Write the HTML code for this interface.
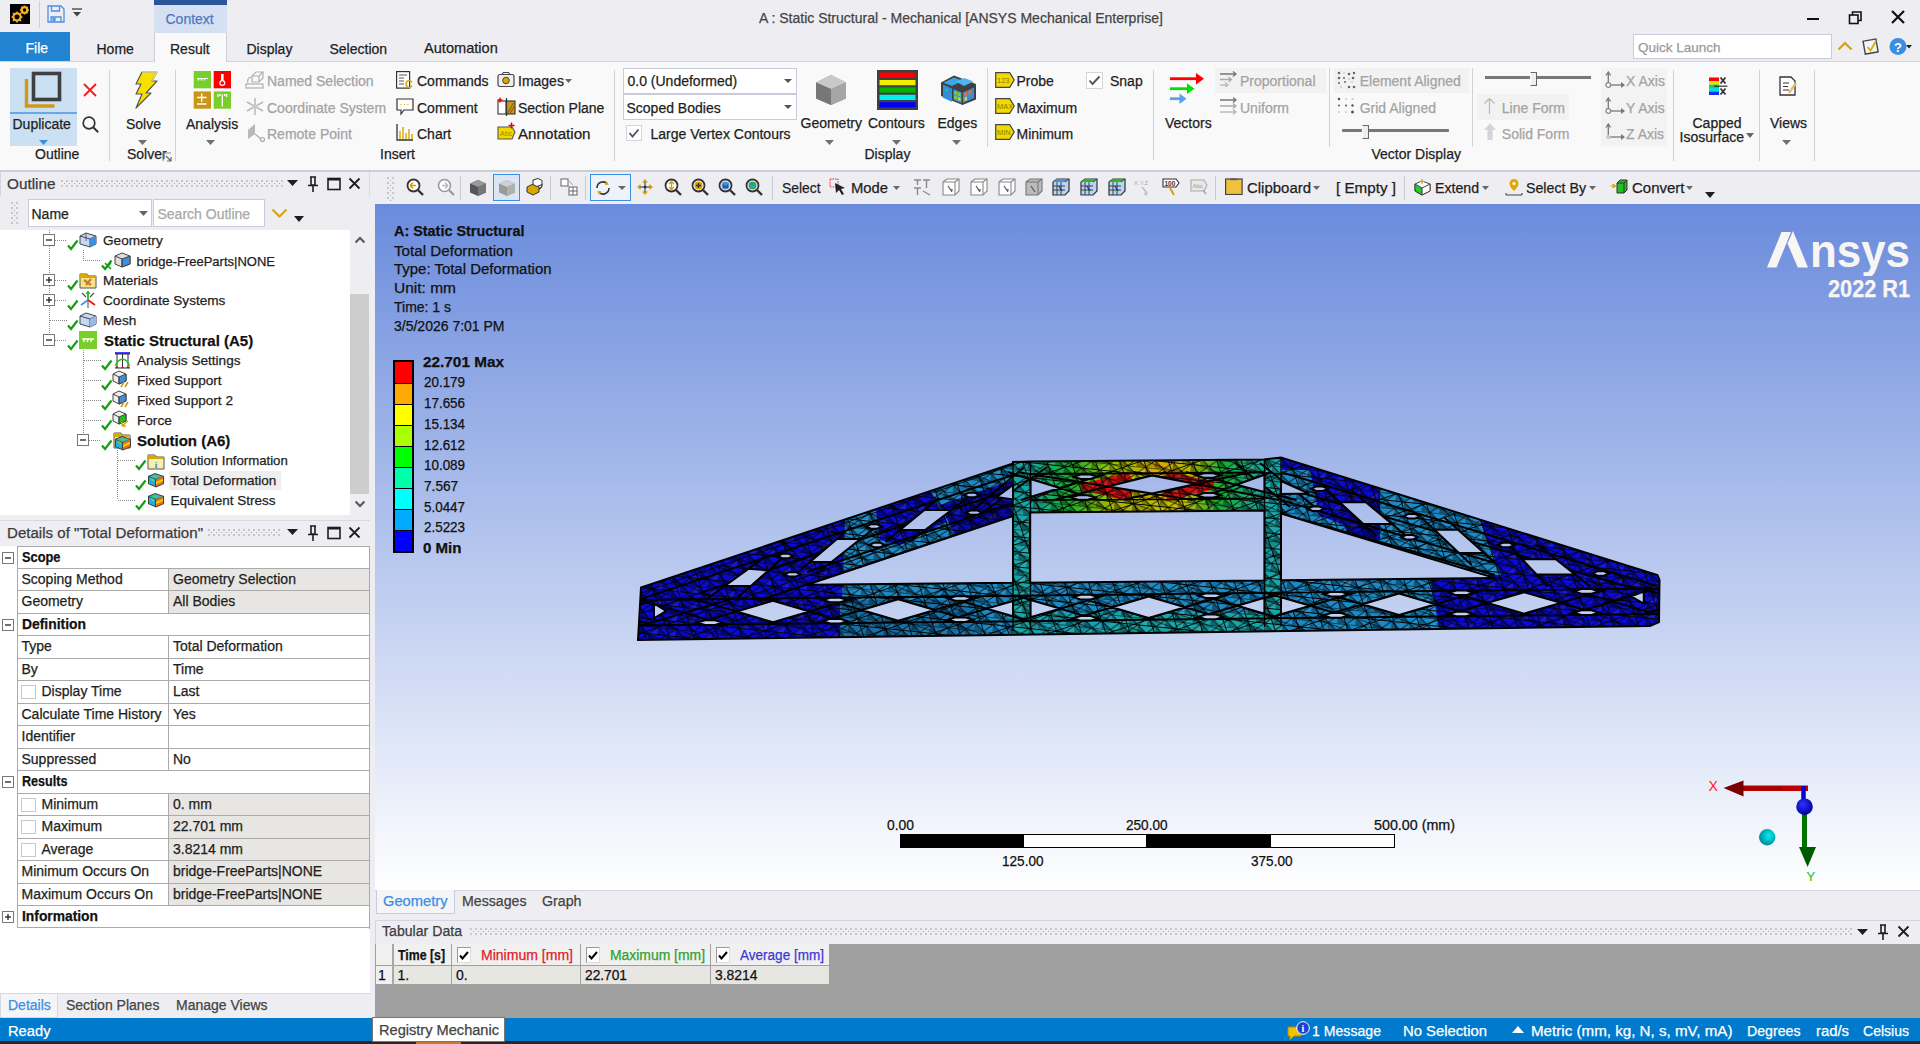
<!DOCTYPE html><html><head><meta charset="utf-8"><style>
html,body{margin:0;padding:0;width:1920px;height:1044px;overflow:hidden;background:#eeeef2;font-family:"Liberation Sans",sans-serif;}
.a{position:absolute;}
.t{position:absolute;white-space:nowrap;-webkit-text-stroke:0.25px currentColor;}
</style></head><body>

<div class="a" style="left:0px;top:0px;width:1920px;height:32px;background:#eeeef2"></div>
<svg class="a" style="left:10px;top:4px;" width="20" height="20" viewBox="0 0 20 20"><rect width="20" height="20" fill="#000"/>
<g fill="none" stroke="#f0b020" stroke-width="2.2"><circle cx="7" cy="13" r="3.6"/><circle cx="14.5" cy="6" r="2.8"/></g>
<g stroke="#f0b020" stroke-width="1.6"><path d="M7 7.5v2M7 16.5v2M1.5 13h2M10.5 13h2M3 9l1.4 1.4M11 17l-1.4-1.4M3 17l1.4-1.4M11 9l-1.4 1.4"/>
<path d="M14.5 1.5v1.5M14.5 9v1.5M10 6h1.5M17.5 6h1.5M11.3 2.8l1 1M17.7 9.2l-1-1M11.3 9.2l1-1M17.7 2.8l-1 1"/></g></svg>
<div class="a" style="left:39px;top:1px;width:1px;height:27px;background:#d0d0d4"></div>
<svg class="a" style="left:47px;top:5px;" width="18" height="18" viewBox="0 0 18 18"><g fill="none" stroke="#4a90e2" stroke-width="1.3"><path d="M1 1h13l3 3v13H1z"/><path d="M4.5 1v5h8V1"/><path d="M4 17v-5h10v5"/><rect x="6" y="13.5" width="2" height="2"/></g></svg>
<svg class="a" style="left:72px;top:8px;" width="10" height="9" viewBox="0 0 10 9"><path d="M0 1h10" stroke="#555" stroke-width="1.5"/><path d="M1 4h8l-4 4.5z" fill="#444"/></svg>
<div class="a" style="left:154px;top:0px;width:73px;height:5px;background:#2b579a"></div>
<div class="a" style="left:154px;top:5px;width:73px;height:28px;background:#d5e1f2"></div>
<div class="t" style="left:165.5px;top:11.85px;font-size:14px;line-height:14px;color:#4f78bd;font-weight:normal;">Context</div>
<div class="t" style="left:759px;top:10.65px;font-size:14px;line-height:14px;color:#444;font-weight:normal;">A : Static Structural - Mechanical [ANSYS Mechanical Enterprise]</div>
<div class="a" style="left:1807px;top:18px;width:12px;height:2px;background:#111"></div>
<svg class="a" style="left:1848px;top:10px;" width="16" height="16" viewBox="0 0 16 16"><g fill="none" stroke="#111" stroke-width="1.6"><rect x="1.5" y="5" width="8.5" height="8.5"/><path d="M4.5 5V2h8.5v8.5H10"/></g></svg>
<svg class="a" style="left:1890px;top:9px;" width="16" height="16" viewBox="0 0 16 16"><path d="M2 2l12 12M14 2L2 14" stroke="#111" stroke-width="2.2"/></svg>
<div class="a" style="left:0px;top:61px;width:1920px;height:1px;background:#d4d4d8"></div>
<div class="a" style="left:0px;top:32px;width:70px;height:29px;background:#2383d3"></div>
<div class="t" style="left:25.5px;top:40.85px;font-size:14px;line-height:14px;color:#fff;font-weight:normal;">File</div>
<div class="t" style="left:96.5px;top:41.65px;font-size:14px;line-height:14px;color:#1e1e1e;font-weight:normal;">Home</div>
<div class="a" style="left:154px;top:33px;width:73px;height:29px;background:#f9f9f9;border-left:1px solid #d0d0d4;border-right:1px solid #d0d0d4;box-sizing:border-box"></div>
<div class="t" style="left:170px;top:41.65px;font-size:14px;line-height:14px;color:#1e1e1e;font-weight:normal;">Result</div>
<div class="t" style="left:246.5px;top:41.65px;font-size:14px;line-height:14px;color:#1e1e1e;font-weight:normal;">Display</div>
<div class="t" style="left:329.5px;top:41.65px;font-size:14px;line-height:14px;color:#1e1e1e;font-weight:normal;">Selection</div>
<div class="t" style="left:424px;top:41.14px;font-size:14.6px;line-height:14.6px;color:#1e1e1e;font-weight:normal;">Automation</div>
<div class="a" style="left:1633px;top:34px;width:199px;height:25px;background:#fff;border:1px solid #c8cbd8;box-sizing:border-box"></div>
<div class="t" style="left:1638px;top:40.57px;font-size:13.5px;line-height:13.5px;color:#9a9a9a;font-weight:normal;">Quick Launch</div>
<svg class="a" style="left:1837px;top:40px;" width="16" height="12" viewBox="0 0 16 12"><path d="M1.5 9.5L8 3l6.5 6.5" fill="none" stroke="#d4a017" stroke-width="2.2"/></svg>
<svg class="a" style="left:1861px;top:36px;" width="20" height="20" viewBox="0 0 20 20"><g transform="rotate(-10 10 10)"><rect x="3" y="4" width="13" height="13" fill="#f4f4f4" stroke="#444" stroke-width="1.4"/></g><path d="M6.5 11l3 3.5L15 5" fill="none" stroke="#e0a800" stroke-width="1.8"/></svg>
<svg class="a" style="left:1889px;top:37px;" width="24" height="20" viewBox="0 0 24 20"><circle cx="9" cy="9.5" r="8.5" fill="#3b8de4"/><text x="9" y="14.5" font-family="Liberation Sans" font-weight="bold" font-size="13" fill="#fff" text-anchor="middle">?</text><path d="M17 8h6l-3 3.5z" fill="#222"/></svg>
<div class="a" style="left:0px;top:62px;width:1920px;height:108px;background:#f9f9f9"></div>
<div class="a" style="left:0px;top:170px;width:1920px;height:2px;background:#cdcdd4"></div>
<div class="a" style="left:10px;top:68px;width:67px;height:78px;background:#cce0f4"></div>
<div class="a" style="left:10px;top:112px;width:67px;height:2px;background:#6aa7e6"></div>
<svg class="a" style="left:22px;top:70px;" width="42" height="40" viewBox="0 0 42 40"><path d="M4.5 9v27h28" fill="none" stroke="#cf9a12" stroke-width="3.4"/><rect x="11.5" y="3.5" width="26" height="26" fill="none" stroke="#404040" stroke-width="3.6"/></svg>
<div class="t" style="left:12.5px;top:117.15px;font-size:14px;line-height:14px;color:#1e1e1e;font-weight:normal;">Duplicate</div>
<svg class="a" style="left:38.5px;top:140px;" width="9" height="5" viewBox="0 0 9 5"><path d="M0 0h9L4.5 5z" fill="#3a8fe0"/></svg>
<svg class="a" style="left:82px;top:82px;" width="16" height="16" viewBox="0 0 16 16"><path d="M2 2l12 12M14 2L2 14" stroke="#ee1c1c" stroke-width="1.8"/></svg>
<svg class="a" style="left:81px;top:115px;" width="19" height="19" viewBox="0 0 19 19"><circle cx="8" cy="8" r="5.8" fill="none" stroke="#333" stroke-width="1.7"/><path d="M12.2 12.2l5 5" stroke="#333" stroke-width="2"/></svg>
<div class="t" style="left:35px;top:146.75px;font-size:14px;line-height:14px;color:#1e1e1e;font-weight:normal;">Outline</div>
<div class="a" style="left:109px;top:70px;width:1px;height:91px;background:#d2d2d8"></div>
<svg class="a" style="left:132px;top:71px;" width="26" height="38" viewBox="0 0 26 38"><path d="M10 1h15l-5 9h5L14 22h5L4 37l6-14H4l5-10H4z" fill="#f7e000" stroke="#555" stroke-width="1.2" stroke-linejoin="round"/><path d="M10 1h15l-5 9" fill="none" stroke="#f9f3a0" stroke-width="1"/></svg>
<div class="t" style="left:126px;top:117.15px;font-size:14px;line-height:14px;color:#1e1e1e;font-weight:normal;">Solve</div>
<svg class="a" style="left:138px;top:140px;" width="9" height="5" viewBox="0 0 9 5"><path d="M0 0h9L4.5 5z" fill="#707070"/></svg>
<div class="t" style="left:127px;top:146.75px;font-size:14px;line-height:14px;color:#1e1e1e;font-weight:normal;">Solver</div>
<svg class="a" style="left:162px;top:152px;" width="10" height="10" viewBox="0 0 10 10"><path d="M1 9V1h8" fill="none" stroke="#888" stroke-width="1"/><path d="M4 4l5 5M9 5v4H5" fill="none" stroke="#666" stroke-width="1.2"/></svg>
<div class="a" style="left:175px;top:70px;width:1px;height:91px;background:#d2d2d8"></div>
<svg class="a" style="left:193px;top:71px;" width="39" height="38" viewBox="0 0 39 38"><rect x="0.7" y="0" width="17.3" height="17.3" fill="#78cf2c"/><rect x="20.7" y="0" width="17.3" height="17.3" fill="#f00"/>
<rect x="0.7" y="20.4" width="17.3" height="17.3" fill="#c9961a"/><rect x="20.7" y="20.4" width="17.3" height="17.3" fill="#78cf2c"/>
<path d="M4 7.5h11M6 7.5l-1 2M9 7.5l-1 2M12 7.5l-1 2" stroke="#fff" stroke-width="1.2"/>
<circle cx="29.3" cy="12" r="2.4" fill="none" stroke="#fff" stroke-width="1.2"/><path d="M29.3 3v6.6" stroke="#fff" stroke-width="2.6"/>
<path d="M4 26.5h9.5M8.7 22.5v8.5M4 33h9.5" stroke="#fff" stroke-width="1.3"/>
<path d="M29.3 23.5v12M25 23v3M33.6 23v3M27 23v2M31.6 23v2" stroke="#fff" stroke-width="1.3"/></svg>
<div class="t" style="left:186px;top:117.15px;font-size:14px;line-height:14px;color:#1e1e1e;font-weight:normal;">Analysis</div>
<svg class="a" style="left:206px;top:140px;" width="9" height="5" viewBox="0 0 9 5"><path d="M0 0h9L4.5 5z" fill="#707070"/></svg>
<svg class="a" style="left:245px;top:71px;" width="20" height="18" viewBox="0 0 20 18"><g fill="none" stroke="#b0b0b0" stroke-width="1.2"><rect x="1" y="13" width="17" height="4"/><path d="M7 11V5l4-4h7v6l-4 4zM7 5h7l4-4M14 5v6"/><path d="M3 12c-1-3 0-5 3-6"/></g></svg>
<div class="t" style="left:267px;top:74.15px;font-size:14px;line-height:14px;color:#a3a3a3;font-weight:normal;">Named Selection</div>
<svg class="a" style="left:246px;top:97px;" width="18" height="19" viewBox="0 0 18 19"><g stroke="#b8b8b8" stroke-width="1.5"><path d="M9 1v17M1 5l16 9M17 5L1 14"/></g><circle cx="9" cy="9.5" r="2" fill="#c8c8c8"/></svg>
<div class="t" style="left:267px;top:100.65px;font-size:14px;line-height:14px;color:#a3a3a3;font-weight:normal;">Coordinate System</div>
<svg class="a" style="left:246px;top:122px;" width="20" height="20" viewBox="0 0 20 20"><path d="M2 8l7-6v10l-7 5z" fill="#b8b8b8"/><path d="M9 12l6 5" stroke="#aaa" stroke-width="1.2"/><circle cx="16.5" cy="17.5" r="2" fill="none" stroke="#aaa" stroke-width="1.2"/></svg>
<div class="t" style="left:267px;top:126.75px;font-size:14px;line-height:14px;color:#a3a3a3;font-weight:normal;">Remote Point</div>
<svg class="a" style="left:396px;top:71px;" width="18" height="18" viewBox="0 0 18 18"><rect x="0.6" y="0.6" width="13" height="16.5" fill="#fff" stroke="#333" stroke-width="1.2"/><path d="M3 4h8M3 7h5M3 10h5M3 13h5" stroke="#555" stroke-width="1"/><text x="9" y="17" font-family="Liberation Sans" font-size="11" fill="#d9a800" font-weight="bold">C</text></svg>
<div class="t" style="left:417px;top:74.15px;font-size:14px;line-height:14px;color:#1e1e1e;font-weight:normal;">Commands</div>
<svg class="a" style="left:396px;top:98px;" width="18" height="18" viewBox="0 0 18 18"><path d="M1 1h16v11H8l-3 4v-4H1z" fill="#fff" stroke="#333" stroke-width="1.2"/><path d="M4.5 6.5h1M8 6.5h1M11.5 6.5h1" stroke="#d9a800" stroke-width="1.2"/></svg>
<div class="t" style="left:417px;top:100.65px;font-size:14px;line-height:14px;color:#1e1e1e;font-weight:normal;">Comment</div>
<svg class="a" style="left:396px;top:123px;" width="18" height="18" viewBox="0 0 18 18"><path d="M1 1v16h16" fill="none" stroke="#333" stroke-width="1.3"/><path d="M4 16V8M7 16V4M10 16V10M13 16V6M16 16V11" stroke="#d9a800" stroke-width="1.4"/></svg>
<div class="t" style="left:417px;top:126.75px;font-size:14px;line-height:14px;color:#1e1e1e;font-weight:normal;">Chart</div>
<svg class="a" style="left:497px;top:71px;" width="18" height="17" viewBox="0 0 18 17"><rect x="1" y="3.5" width="16" height="12" rx="2" fill="#eee" stroke="#444" stroke-width="1.2"/><path d="M5 3.5l1.5-2h5l1.5 2" fill="none" stroke="#444" stroke-width="1.1"/><circle cx="9" cy="9.5" r="3.3" fill="#d9a800" stroke="#444" stroke-width="1"/></svg>
<div class="t" style="left:518px;top:74.15px;font-size:14px;line-height:14px;color:#1e1e1e;font-weight:normal;">Images</div>
<svg class="a" style="left:565px;top:79px;" width="7" height="4" viewBox="0 0 7 4"><path d="M0 0h7L3.5 4z" fill="#666"/></svg>
<svg class="a" style="left:497px;top:97px;" width="19" height="19" viewBox="0 0 19 19"><rect x="1" y="4" width="9" height="13" fill="#fff" stroke="#333" stroke-width="1.1"/><rect x="9" y="4" width="9" height="13" fill="#c9961a" stroke="#333" stroke-width="1.1"/><path d="M10.5 16l6-10M12.5 17l5-8" stroke="#7a5a00" stroke-width="1"/><path d="M9.5 1v18" stroke="#333" stroke-width="1.2"/><path d="M3 0.5v5M0.5 3h5" stroke="#e00" stroke-width="1.4"/></svg>
<div class="t" style="left:518px;top:100.65px;font-size:14px;line-height:14px;color:#1e1e1e;font-weight:normal;">Section Plane</div>
<svg class="a" style="left:497px;top:122px;" width="19" height="19" viewBox="0 0 19 19"><path d="M1 5h14l3 5-3 7H1z" fill="#f2d800" stroke="#555" stroke-width="1.1"/><text x="3" y="14" font-family="Liberation Sans" font-size="7" fill="#9a8a00">Abc</text><path d="M14.5 0.5v6M11.5 3.5h6" stroke="#e00" stroke-width="1.5"/></svg>
<div class="t" style="left:518px;top:126.75px;font-size:14px;line-height:14px;color:#1e1e1e;font-weight:normal;transform:scaleX(1.0831);transform-origin:0 0;">Annotation</div>
<div class="t" style="left:380px;top:146.75px;font-size:14px;line-height:14px;color:#1e1e1e;font-weight:normal;">Insert</div>
<div class="a" style="left:614px;top:70px;width:1px;height:91px;background:#d2d2d8"></div>
<div class="a" style="left:623px;top:68px;width:174px;height:26px;background:#fff;border:1px solid #c9cbdc;box-sizing:border-box"></div>
<div class="t" style="left:627.5px;top:74.15px;font-size:14px;line-height:14px;color:#1e1e1e;font-weight:normal;">0.0 (Undeformed)</div>
<svg class="a" style="left:784px;top:79px;" width="8" height="4" viewBox="0 0 8 4"><path d="M0 0h8L4 4z" fill="#555"/></svg>
<div class="a" style="left:623px;top:94px;width:174px;height:26px;background:#fff;border:1px solid #c9cbdc;box-sizing:border-box"></div>
<div class="t" style="left:626.5px;top:100.65px;font-size:14px;line-height:14px;color:#1e1e1e;font-weight:normal;">Scoped Bodies</div>
<svg class="a" style="left:784px;top:105px;" width="8" height="4" viewBox="0 0 8 4"><path d="M0 0h8L4 4z" fill="#555"/></svg>
<div class="a" style="left:626px;top:125px;width:16px;height:16px;background:#fff;border:1px solid #d4d4dc;box-sizing:border-box"></div>
<svg class="a" style="left:628px;top:128px;" width="12" height="10" viewBox="0 0 12 10"><path d="M1.5 5l3 3.5L10.5 1.5" fill="none" stroke="#555" stroke-width="1.9"/></svg>
<div class="t" style="left:650.5px;top:126.75px;font-size:14px;line-height:14px;color:#1e1e1e;font-weight:normal;">Large Vertex Contours</div>
<svg class="a" style="left:815px;top:74px;" width="32" height="32" viewBox="0 0 32 32"><path d="M16 1l15 7.5v16L16 31 1 24.5v-16z" fill="#8e8e8e"/><path d="M1 8.5L16 15l15-6.5L16 1z" fill="#c9c9c9"/><path d="M16 15v16l15-6.5v-16z" fill="#a5a5a5"/><path d="M1 8.5L16 15v16L1 24.5z" fill="#777"/></svg>
<div class="t" style="left:800.5px;top:116.15px;font-size:14px;line-height:14px;color:#1e1e1e;font-weight:normal;">Geometry</div>
<svg class="a" style="left:825px;top:140px;" width="9" height="5" viewBox="0 0 9 5"><path d="M0 0h9L4.5 5z" fill="#707070"/></svg>
<svg class="a" style="left:877px;top:70px;" width="41" height="40" viewBox="0 0 41 40"><rect x="0" y="0" width="41" height="40" fill="#404040"/><rect x="2.5" y="2.5" width="36" height="5.2" fill="#f00"/><rect x="2.5" y="10" width="36" height="5.2" fill="#f0f000"/><rect x="2.5" y="17.4" width="36" height="5.2" fill="#00b400"/><rect x="2.5" y="24.8" width="36" height="5.2" fill="#00f0f0"/><rect x="2.5" y="32.2" width="36" height="5.2" fill="#0000f8"/></svg>
<div class="t" style="left:868px;top:116.15px;font-size:14px;line-height:14px;color:#1e1e1e;font-weight:normal;">Contours</div>
<svg class="a" style="left:891.5px;top:140px;" width="9" height="5" viewBox="0 0 9 5"><path d="M0 0h9L4.5 5z" fill="#707070"/></svg>
<svg class="a" style="left:939px;top:73px;" width="38" height="33" viewBox="0 0 38 33"><path d="M2 9.5L15 2.5 37 11v15.5L23.5 32 2 23z" fill="#404040"/>
<path d="M4.5 9.8L15 4.5l8.5 3.3L13 13z" fill="#3aa6e6"/><path d="M16.5 8.5L25.5 5l9 3.5-9.5 4.5z" fill="#50b4ee"/>
<path d="M4 11.5l9 4v13.3l-9-4z" fill="#2e8fd8"/><path d="M6 15l3 1.3v3l-3-1.3z" fill="#18c0a0"/>
<path d="M14.5 16.2l8 3.4v10.5l-8-3.4z" fill="#3a9ae0"/><path d="M15.5 18l2.5 1v3l-2.5-1zM19 19.5l2.5 1v3l-2.5-1zM15.5 22.5l2.5 1v3l-2.5-1z" fill="#8ad020"/><path d="M19 24l2.5 1v3l-2.5-1z" fill="#e6d800"/>
<path d="M24 19.5l11-5v10.5l-11 5z" fill="#3a8ee0"/><path d="M25.5 20l2.5-1.1v3.5l-2.5 1.1zM29.5 18.2l2.5-1.1v3.5l-2.5 1.1z" fill="#f07020"/><path d="M25.5 24.5l2.5-1.1v3.5l-2.5 1.1z" fill="#e6d800"/></svg>
<div class="t" style="left:937.5px;top:116.15px;font-size:14px;line-height:14px;color:#1e1e1e;font-weight:normal;">Edges</div>
<svg class="a" style="left:951.5px;top:140px;" width="9" height="5" viewBox="0 0 9 5"><path d="M0 0h9L4.5 5z" fill="#707070"/></svg>
<div class="t" style="left:864.5px;top:146.55px;font-size:14px;line-height:14px;color:#1e1e1e;font-weight:normal;">Display</div>
<div class="a" style="left:987px;top:68px;width:1px;height:79px;background:#d2d2d8"></div>
<svg class="a" style="left:995px;top:72px;" width="20" height="16" viewBox="0 0 20 16"><path d="M0.7 0.7h14l4.5 7.3-4.5 7.3h-14z" fill="#f2d900" stroke="#444" stroke-width="1.2"/><text x="2" y="11" font-family="Liberation Sans" font-size="7.5" fill="#8a7a00">123</text></svg>
<div class="t" style="left:1016.5px;top:74.35px;font-size:14px;line-height:14px;color:#1e1e1e;font-weight:normal;">Probe</div>
<svg class="a" style="left:995px;top:98px;" width="20" height="16" viewBox="0 0 20 16"><path d="M0.7 0.7h14l4.5 7.3-4.5 7.3h-14z" fill="#f2d900" stroke="#444" stroke-width="1.2"/><text x="2" y="11" font-family="Liberation Sans" font-size="7.5" fill="#8a7a00">MAX</text></svg>
<div class="t" style="left:1016.5px;top:100.65px;font-size:14px;line-height:14px;color:#1e1e1e;font-weight:normal;">Maximum</div>
<svg class="a" style="left:995px;top:124px;" width="20" height="16" viewBox="0 0 20 16"><path d="M0.7 0.7h14l4.5 7.3-4.5 7.3h-14z" fill="#f2d900" stroke="#444" stroke-width="1.2"/><text x="2" y="11" font-family="Liberation Sans" font-size="7.5" fill="#8a7a00">MIN</text></svg>
<div class="t" style="left:1016.5px;top:126.75px;font-size:14px;line-height:14px;color:#1e1e1e;font-weight:normal;">Minimum</div>
<div class="a" style="left:1086px;top:72px;width:17px;height:17px;background:#fff;border:1px solid #d4d4dc;box-sizing:border-box"></div>
<svg class="a" style="left:1088px;top:75px;" width="13" height="11" viewBox="0 0 13 11"><path d="M1.5 5.5l3 3.5L11.5 1.5" fill="none" stroke="#555" stroke-width="1.9"/></svg>
<div class="t" style="left:1110px;top:74.35px;font-size:14px;line-height:14px;color:#1e1e1e;font-weight:normal;">Snap</div>
<div class="a" style="left:1153px;top:70px;width:1px;height:90px;background:#d2d2d8"></div>
<svg class="a" style="left:1169px;top:71px;" width="38" height="33" viewBox="0 0 38 33"><path d="M1 7.7h27" stroke="#f00" stroke-width="2.8"/><path d="M27 2l8 5.7-8 5.7z" fill="#f00"/>
<path d="M1 17.7h19" stroke="#00e000" stroke-width="2.8"/><path d="M18 12.3l7.5 5.4-7.5 5.4z" fill="#00e000"/>
<path d="M1 27.7h11" stroke="#5aa0ee" stroke-width="2.8"/><path d="M10.5 22.5l7 5.2-7 5.2z" fill="#5aa0ee"/></svg>
<div class="t" style="left:1165px;top:116.15px;font-size:14px;line-height:14px;color:#1e1e1e;font-weight:normal;">Vectors</div>
<div class="a" style="left:1215px;top:68px;width:111px;height:25px;background:#f2f2f2"></div>
<svg class="a" style="left:1219px;top:71px;" width="19" height="16" viewBox="0 0 19 16"><g fill="none" stroke-width="1.3"><path d="M1 3h16M14 0.5l3 2.5-3 2.5" stroke="#777"/><path d="M1 8.5h11M9.5 6l3 2.5-3 2.5" stroke="#aaa"/><path d="M1 14h7M6 11.5l3 2.5-3 2.5" stroke="#bbb"/></g></svg>
<div class="t" style="left:1240px;top:74.15px;font-size:14px;line-height:14px;color:#a3a3a3;font-weight:normal;">Proportional</div>
<svg class="a" style="left:1219px;top:97px;" width="19" height="18" viewBox="0 0 19 18"><g fill="none" stroke-width="1.3"><path d="M1 3h16M14 0.5l3 2.5-3 2.5" stroke="#777"/><path d="M1 9h16M14 6.5l3 2.5-3 2.5" stroke="#aaa"/><path d="M1 15h16M14 12.5l3 2.5-3 2.5" stroke="#bbb"/></g></svg>
<div class="t" style="left:1240px;top:100.65px;font-size:14px;line-height:14px;color:#a3a3a3;font-weight:normal;">Uniform</div>
<div class="a" style="left:1329px;top:68px;width:1px;height:79px;background:#d2d2d8"></div>
<div class="a" style="left:1334px;top:68px;width:135px;height:25px;background:#f2f2f2"></div>
<svg class="a" style="left:1337px;top:71px;" width="20" height="18" viewBox="0 0 20 18"><g fill="#666"><circle cx="2" cy="2" r="1.3"/><circle cx="12" cy="3" r="1.3"/><circle cx="17" cy="2" r="1.2"/><circle cx="2" cy="7" r="1.3"/><circle cx="7" cy="7" r="1"/><circle cx="16" cy="7" r="1.3"/><circle cx="2" cy="12" r="1"/><circle cx="8" cy="11" r="1"/><circle cx="12" cy="16" r="1.3"/><circle cx="17" cy="16" r="1.3"/></g><g fill="#ccc"><circle cx="7" cy="2" r="1"/><circle cx="12" cy="8" r="1"/><circle cx="4" cy="16" r="1"/><circle cx="15" cy="11" r="1"/></g></svg>
<div class="t" style="left:1359.7px;top:74.15px;font-size:14px;line-height:14px;color:#a3a3a3;font-weight:normal;">Element Aligned</div>
<svg class="a" style="left:1337px;top:97px;" width="20" height="18" viewBox="0 0 20 18"><g fill="#555"><circle cx="2" cy="2" r="1.3"/><circle cx="2" cy="8.5" r="1"/><circle cx="9" cy="8.5" r="1"/><circle cx="15.5" cy="8.5" r="1.2"/><circle cx="15.5" cy="15" r="1.5"/></g><g fill="#c8c8c8"><circle cx="9" cy="2" r="1"/><circle cx="15.5" cy="2" r="1.1"/><circle cx="2" cy="15" r="1"/><circle cx="9" cy="15" r="1"/></g></svg>
<div class="t" style="left:1359.7px;top:100.65px;font-size:14px;line-height:14px;color:#a3a3a3;font-weight:normal;">Grid Aligned</div>
<div class="a" style="left:1342px;top:129px;width:107px;height:3px;background:#777;border-radius:1px"></div>
<div class="a" style="left:1362px;top:125px;width:7px;height:14px;background:#eee;border:1px solid #666;border-left-color:#fff;box-sizing:border-box"></div>
<div class="t" style="left:1371.5px;top:146.55px;font-size:14px;line-height:14px;color:#1e1e1e;font-weight:normal;">Vector Display</div>
<div class="a" style="left:1472px;top:68px;width:1px;height:79px;background:#d2d2d8"></div>
<div class="a" style="left:1485px;top:76px;width:106px;height:3px;background:#777"></div>
<div class="a" style="left:1530px;top:72px;width:7px;height:14px;background:#eee;border:1px solid #666;border-left-color:#fff;box-sizing:border-box"></div>
<div class="a" style="left:1477px;top:94px;width:92px;height:26px;background:#f2f2f2"></div>
<svg class="a" style="left:1483px;top:97px;" width="14" height="18" viewBox="0 0 14 18"><path d="M6.5 17V2M1.5 6.5L6.5 1.5l5 5" fill="none" stroke="#b8b8b8" stroke-width="1.2"/></svg>
<div class="t" style="left:1501.8px;top:100.65px;font-size:14px;line-height:14px;color:#a3a3a3;font-weight:normal;">Line Form</div>
<svg class="a" style="left:1483px;top:123px;" width="14" height="18" viewBox="0 0 14 18"><path d="M7 0.5L13 7H9.5v10h-5V7H1z" fill="#d4d4d4"/></svg>
<div class="t" style="left:1501.8px;top:126.75px;font-size:14px;line-height:14px;color:#a3a3a3;font-weight:normal;">Solid Form</div>
<div class="a" style="left:1601px;top:68px;width:66px;height:78px;background:#f3f3f3"></div>
<svg class="a" style="left:1605px;top:71px;" width="21" height="18" viewBox="0 0 21 18"><path d="M3.3 2.5v11M1 4.5l2.3-3.5 2.3 3.5" fill="none" stroke="#777" stroke-width="1.3"/><path d="M5 14h12" stroke="#777" stroke-width="1.3"/><path d="M16 11l4 3-4 3z" fill="#777"/><circle cx="3.3" cy="14" r="2.3" fill="#fff" stroke="#888" stroke-width="1.3"/></svg>
<div class="t" style="left:1626px;top:74.15px;font-size:14px;line-height:14px;color:#a3a3a3;font-weight:normal;">X Axis</div>
<svg class="a" style="left:1605px;top:97px;" width="21" height="18" viewBox="0 0 21 18"><path d="M3.3 2.5v11M1 4.5l2.3-3.5 2.3 3.5" fill="none" stroke="#777" stroke-width="1.3"/><path d="M5 14h12" stroke="#777" stroke-width="1.3"/><path d="M16 11l4 3-4 3z" fill="#777"/><circle cx="3.3" cy="14" r="2.3" fill="#fff" stroke="#888" stroke-width="1.3"/></svg>
<div class="t" style="left:1626px;top:100.65px;font-size:14px;line-height:14px;color:#a3a3a3;font-weight:normal;">Y Axis</div>
<svg class="a" style="left:1605px;top:123px;" width="21" height="18" viewBox="0 0 21 18"><path d="M3.3 2.5v11M1 4.5l2.3-3.5 2.3 3.5" fill="none" stroke="#777" stroke-width="1.3"/><path d="M5 14h12" stroke="#777" stroke-width="1.3"/><path d="M16 11l4 3-4 3z" fill="#777"/><circle cx="3.3" cy="14" r="2.3" fill="#ccc"/></svg>
<div class="t" style="left:1626px;top:126.75px;font-size:14px;line-height:14px;color:#a3a3a3;font-weight:normal;">Z Axis</div>
<div class="a" style="left:1673px;top:70px;width:1px;height:91px;background:#d2d2d8"></div>
<svg class="a" style="left:1708px;top:76px;" width="20" height="20" viewBox="0 0 20 20"><rect x="1" y="1.5" width="10" height="3.5" fill="#f00"/><rect x="1" y="5" width="10" height="3.5" fill="#f0e000"/><rect x="1" y="8.5" width="10" height="3.5" fill="#30d030"/><rect x="1" y="12" width="10" height="3.5" fill="#00e0e0"/><rect x="1" y="15.5" width="10" height="3.5" fill="#1030f0"/><path d="M6 10.2h13.5" stroke="#333" stroke-width="1.2"/><path d="M12.5 1.5l5 6M17.5 1.5l-5 6M12.5 12.5l5 6M17.5 12.5l-5 6" stroke="#333" stroke-width="1.8"/></svg>
<div class="t" style="left:1692.5px;top:116.15px;font-size:14px;line-height:14px;color:#1e1e1e;font-weight:normal;">Capped</div>
<div class="t" style="left:1679.5px;top:130.15px;font-size:14px;line-height:14px;color:#1e1e1e;font-weight:normal;">Isosurface</div>
<svg class="a" style="left:1746px;top:133px;" width="8" height="5" viewBox="0 0 8 5"><path d="M0 0h8L4 5z" fill="#666"/></svg>
<div class="a" style="left:1759px;top:70px;width:1px;height:91px;background:#d2d2d8"></div>
<svg class="a" style="left:1779px;top:76px;" width="20" height="21" viewBox="0 0 20 21"><path d="M1 1h11l4 4v14H1z" fill="#fff" stroke="#333" stroke-width="1.3"/><path d="M4 7h6M4 10.5h5M4 14h6" stroke="#333" stroke-width="1.2"/><path d="M10 17l7-10" stroke="#e0c070" stroke-width="2.4"/></svg>
<div class="t" style="left:1770px;top:116.15px;font-size:14px;line-height:14px;color:#1e1e1e;font-weight:normal;">Views</div>
<svg class="a" style="left:1782px;top:140px;" width="9" height="5" viewBox="0 0 9 5"><path d="M0 0h9L4.5 5z" fill="#707070"/></svg>
<div class="a" style="left:1814px;top:70px;width:1px;height:91px;background:#d2d2d8"></div>
<div class="a" style="left:0px;top:172px;width:370px;height:24px;background:#eeeef2"></div>
<div class="a" style="left:0px;top:172px;width:1px;height:24px;background:#d4d4e0"></div>
<div class="t" style="left:6.7px;top:176.85px;font-size:14px;line-height:14px;color:#3c3c3c;font-weight:normal;transform:scaleX(1.0934);transform-origin:0 0;">Outline</div>
<div class="a" style="left:61px;top:180px;width:222px;height:8px;background-image:radial-gradient(circle at 1px 1px,#a8a8b2 0.55px,transparent 0.9px),radial-gradient(circle at 3.5px 3.5px,#a8a8b2 0.55px,transparent 0.9px);background-size:5px 5px"></div>
<svg class="a" style="left:287px;top:180px;" width="11" height="6" viewBox="0 0 11 6"><path d="M0 0h11L5.5 6z" fill="#1e1e1e"/></svg>
<svg class="a" style="left:307px;top:176px;" width="12" height="16" viewBox="0 0 12 16"><path d="M3 1h6M4 1v8h4V1M1 9.5h10M6 10v6" fill="none" stroke="#1e1e1e" stroke-width="1.6"/></svg>
<svg class="a" style="left:327px;top:177px;" width="14" height="14" viewBox="0 0 14 14"><rect x="1" y="1.5" width="12" height="11" fill="none" stroke="#1e1e1e" stroke-width="1.6"/><path d="M1 2.5h12" stroke="#1e1e1e" stroke-width="2"/></svg>
<svg class="a" style="left:348px;top:177px;" width="13" height="13" viewBox="0 0 13 13"><path d="M1.5 1.5l10 10M11.5 1.5l-10 10" stroke="#1e1e1e" stroke-width="1.8"/></svg>
<div class="a" style="left:369px;top:172px;width:1px;height:24px;background:#d8d8e0"></div>
<div class="a" style="left:11px;top:202px;width:8px;height:23px;background-image:radial-gradient(circle at 1px 1px,#a8a8b2 0.55px,transparent 0.9px),radial-gradient(circle at 3.5px 3.5px,#a8a8b2 0.55px,transparent 0.9px);background-size:5px 5px"></div>
<div class="a" style="left:28px;top:199px;width:124px;height:28px;background:#fff;border:1px solid #c9cbdc;box-sizing:border-box"></div>
<div class="t" style="left:31.5px;top:207.15px;font-size:14px;line-height:14px;color:#1e1e1e;font-weight:normal;">Name</div>
<svg class="a" style="left:139px;top:211px;" width="9" height="5" viewBox="0 0 9 5"><path d="M0 0h9L4.5 5z" fill="#666"/></svg>
<div class="a" style="left:153px;top:199px;width:112px;height:28px;background:#fff;border:1px solid #c9cbdc;box-sizing:border-box"></div>
<div class="t" style="left:157.5px;top:207.15px;font-size:14px;line-height:14px;color:#a8a8a8;font-weight:normal;">Search Outline</div>
<svg class="a" style="left:271px;top:208px;" width="17" height="10" viewBox="0 0 17 10"><path d="M1.5 1.5l7 7 7-7" fill="none" stroke="#d4a017" stroke-width="2"/></svg>
<svg class="a" style="left:294px;top:216px;" width="10" height="6" viewBox="0 0 10 6"><path d="M0 0h10L5 6z" fill="#1e1e1e"/></svg>
<div class="a" style="left:0px;top:230px;width:350px;height:285px;background:#fff"></div>
<div class="a" style="left:350px;top:230px;width:19px;height:285px;background:#eeeef2"></div>
<svg class="a" style="left:354px;top:236px;" width="12" height="8" viewBox="0 0 12 8"><path d="M1.5 6.5L6 2l4.5 4.5" fill="none" stroke="#555" stroke-width="2"/></svg>
<div class="a" style="left:350px;top:294px;width:19px;height:200px;background:#cdcdcd"></div>
<svg class="a" style="left:354px;top:500px;" width="12" height="8" viewBox="0 0 12 8"><path d="M1.5 1.5L6 6l4.5-4.5" fill="none" stroke="#555" stroke-width="2"/></svg>
<div class="a" style="left:49px;top:230px;width:1px;height:111px;background-image:linear-gradient(#888 50%,transparent 50%);background-size:1px 2px"></div>
<div class="a" style="left:83px;top:250px;width:1px;height:10px;background-image:linear-gradient(#888 50%,transparent 50%);background-size:1px 2px"></div>
<div class="a" style="left:83px;top:350px;width:1px;height:90px;background-image:linear-gradient(#888 50%,transparent 50%);background-size:1px 2px"></div>
<div class="a" style="left:117px;top:450px;width:1px;height:50px;background-image:linear-gradient(#888 50%,transparent 50%);background-size:1px 2px"></div>
<div class="a" style="left:55px;top:240px;width:12px;height:1px;background-image:linear-gradient(90deg,#888 50%,transparent 50%);background-size:2px 1px"></div>
<div class="a" style="left:55px;top:280px;width:12px;height:1px;background-image:linear-gradient(90deg,#888 50%,transparent 50%);background-size:2px 1px"></div>
<div class="a" style="left:55px;top:300px;width:12px;height:1px;background-image:linear-gradient(90deg,#888 50%,transparent 50%);background-size:2px 1px"></div>
<div class="a" style="left:50px;top:320px;width:17px;height:1px;background-image:linear-gradient(90deg,#888 50%,transparent 50%);background-size:2px 1px"></div>
<div class="a" style="left:55px;top:340px;width:12px;height:1px;background-image:linear-gradient(90deg,#888 50%,transparent 50%);background-size:2px 1px"></div>
<div class="a" style="left:83px;top:260px;width:18px;height:1px;background-image:linear-gradient(90deg,#888 50%,transparent 50%);background-size:2px 1px"></div>
<div class="a" style="left:84px;top:360px;width:17px;height:1px;background-image:linear-gradient(90deg,#888 50%,transparent 50%);background-size:2px 1px"></div>
<div class="a" style="left:84px;top:380px;width:17px;height:1px;background-image:linear-gradient(90deg,#888 50%,transparent 50%);background-size:2px 1px"></div>
<div class="a" style="left:84px;top:400px;width:17px;height:1px;background-image:linear-gradient(90deg,#888 50%,transparent 50%);background-size:2px 1px"></div>
<div class="a" style="left:84px;top:420px;width:17px;height:1px;background-image:linear-gradient(90deg,#888 50%,transparent 50%);background-size:2px 1px"></div>
<div class="a" style="left:89px;top:440px;width:12px;height:1px;background-image:linear-gradient(90deg,#888 50%,transparent 50%);background-size:2px 1px"></div>
<div class="a" style="left:118px;top:460px;width:17px;height:1px;background-image:linear-gradient(90deg,#888 50%,transparent 50%);background-size:2px 1px"></div>
<div class="a" style="left:118px;top:480px;width:17px;height:1px;background-image:linear-gradient(90deg,#888 50%,transparent 50%);background-size:2px 1px"></div>
<div class="a" style="left:118px;top:500px;width:17px;height:1px;background-image:linear-gradient(90deg,#888 50%,transparent 50%);background-size:2px 1px"></div>
<svg class="a" style="left:43px;top:234px;" width="12" height="12" viewBox="0 0 12 12"><rect x="0.5" y="0.5" width="11" height="11" fill="#fff" stroke="#777"/><path d="M3 6h6" stroke="#222" stroke-width="1.3"/></svg>
<svg class="a" style="left:43px;top:274px;" width="12" height="12" viewBox="0 0 12 12"><rect x="0.5" y="0.5" width="11" height="11" fill="#fff" stroke="#777"/><path d="M3 6h6" stroke="#222" stroke-width="1.3"/><path d="M6 3v6" stroke="#222" stroke-width="1.3"/></svg>
<svg class="a" style="left:43px;top:294px;" width="12" height="12" viewBox="0 0 12 12"><rect x="0.5" y="0.5" width="11" height="11" fill="#fff" stroke="#777"/><path d="M3 6h6" stroke="#222" stroke-width="1.3"/><path d="M6 3v6" stroke="#222" stroke-width="1.3"/></svg>
<svg class="a" style="left:43px;top:334px;" width="12" height="12" viewBox="0 0 12 12"><rect x="0.5" y="0.5" width="11" height="11" fill="#fff" stroke="#777"/><path d="M3 6h6" stroke="#222" stroke-width="1.3"/></svg>
<svg class="a" style="left:77px;top:434px;" width="12" height="12" viewBox="0 0 12 12"><rect x="0.5" y="0.5" width="11" height="11" fill="#fff" stroke="#777"/><path d="M3 6h6" stroke="#222" stroke-width="1.3"/></svg>
<svg class="a" style="left:67px;top:238.5px;" width="12" height="12" viewBox="0 0 12 12"><path d="M1 6.5l3 3.5L10.5 1.5" fill="none" stroke="#10a010" stroke-width="2.2"/></svg>
<svg class="a" style="left:79px;top:232px;" width="18" height="17" viewBox="0 0 18 17"><path d="M1 4l6-3 10 3v8l-6 3-10-3z" fill="#c8d8f0" stroke="#445" stroke-width="1"/><path d="M1 4l10 3 6-3M11 7v8" fill="none" stroke="#445" stroke-width="1"/><path d="M11 7l6-3v8l-6 3z" fill="#3b8ee0"/><path d="M7 1v8" stroke="#445" stroke-width="0.8"/></svg>
<div class="t" style="left:103px;top:233.99px;font-size:13.6px;line-height:13.6px;color:#1e1e1e;font-weight:normal;">Geometry</div>
<svg class="a" style="left:101px;top:258.5px;" width="12" height="12" viewBox="0 0 12 12"><path d="M1 6.5l3 3.5L10.5 1.5" fill="none" stroke="#10a010" stroke-width="2.2"/><path d="M4 4l6 6M10 4l-6 6" stroke="#10a010" stroke-width="1.6"/></svg>
<svg class="a" style="left:114px;top:252px;" width="18" height="16" viewBox="0 0 18 16"><path d="M1 4l7-3 8 3v8l-8 3-7-3z" fill="#ddd" stroke="#444" stroke-width="1"/><path d="M8 7l8-3v8l-8 3z" fill="#3b8ee0" stroke="#444" stroke-width="1"/><path d="M1 4l7 3v8" fill="none" stroke="#444" stroke-width="1"/></svg>
<div class="t" style="left:136.5px;top:254.50px;font-size:13.0px;line-height:13.0px;color:#1e1e1e;font-weight:normal;">bridge-FreeParts|NONE</div>
<svg class="a" style="left:67px;top:278.5px;" width="12" height="12" viewBox="0 0 12 12"><path d="M1 6.5l3 3.5L10.5 1.5" fill="none" stroke="#10a010" stroke-width="2.2"/></svg>
<svg class="a" style="left:79px;top:271px;" width="18" height="18" viewBox="0 0 18 18"><path d="M1 3h7l2 2h7v12H1z" fill="#f7e38a" stroke="#555" stroke-width="1"/><path d="M1 3h7l2 2h7v2H1z" fill="#d9a800"/><path d="M5 9l7 5M7 14l5-6" stroke="#c87838" stroke-width="2.2"/></svg>
<div class="t" style="left:103px;top:273.99px;font-size:13.6px;line-height:13.6px;color:#1e1e1e;font-weight:normal;">Materials</div>
<svg class="a" style="left:67px;top:298.5px;" width="12" height="12" viewBox="0 0 12 12"><path d="M1 6.5l3 3.5L10.5 1.5" fill="none" stroke="#10a010" stroke-width="2.2"/></svg>
<svg class="a" style="left:79px;top:290px;" width="18" height="19" viewBox="0 0 18 19"><path d="M9 10V1.5" stroke="#20c020" stroke-width="1.8"/><path d="M6.5 4L9 0.5 11.5 4z" fill="#20c020"/><path d="M9 10l-7 5" stroke="#4a90e2" stroke-width="1.8"/><path d="M9 10l7 5" stroke="#e02020" stroke-width="1.8"/><path d="M3 3l4 4M15 3l-4 4" stroke="#555" stroke-width="1.2"/><path d="M9 11v7" stroke="#666" stroke-width="1.2"/></svg>
<div class="t" style="left:103px;top:293.99px;font-size:13.6px;line-height:13.6px;color:#1e1e1e;font-weight:normal;">Coordinate Systems</div>
<svg class="a" style="left:67px;top:318.5px;" width="12" height="12" viewBox="0 0 12 12"><path d="M1 6.5l3 3.5L10.5 1.5" fill="none" stroke="#10a010" stroke-width="2.2"/></svg>
<svg class="a" style="left:79px;top:312px;" width="18" height="17" viewBox="0 0 18 17"><path d="M1 4l6-3 10 3v8l-6 3-10-3z" fill="#c8d8f0" stroke="#445" stroke-width="1"/><path d="M1 4l10 3 6-3M11 7v8" fill="none" stroke="#445" stroke-width="1"/><path d="M11 7l6-3v8l-6 3z" fill="#9ab8e8"/></svg>
<div class="t" style="left:103px;top:313.99px;font-size:13.6px;line-height:13.6px;color:#1e1e1e;font-weight:normal;">Mesh</div>
<svg class="a" style="left:67px;top:338.5px;" width="12" height="12" viewBox="0 0 12 12"><path d="M1 6.5l3 3.5L10.5 1.5" fill="none" stroke="#10a010" stroke-width="2.2"/></svg>
<svg class="a" style="left:79px;top:331px;" width="18" height="18" viewBox="0 0 18 18"><rect width="18" height="18" fill="#78cf2c"/><path d="M3 8h12M6 8l-1.5 3M9.5 8l-1.5 3M13 8l-1.5 3" stroke="#fff" stroke-width="1.3"/></svg>
<div class="t" style="left:104px;top:333.30px;font-size:15px;line-height:15px;color:#111;font-weight:bold;">Static Structural (A5)</div>
<svg class="a" style="left:101px;top:358.5px;" width="12" height="12" viewBox="0 0 12 12"><path d="M1 6.5l3 3.5L10.5 1.5" fill="none" stroke="#10a010" stroke-width="2.2"/></svg>
<svg class="a" style="left:113px;top:351px;" width="19" height="19" viewBox="0 0 19 19"><path d="M2 17h15M4 3v14M9.5 3v14M15 3v14M2 3h15" fill="none" stroke="#333" stroke-width="1"/><path d="M2 2h15" stroke="#00f" stroke-width="1.5"/><path d="M2.5 15c3-9 11-9 14 0" fill="none" stroke="#20c020" stroke-width="1.5"/><path d="M2 17l2-2 2 2zM8 17l1.5-2 1.5 2zM13 17l2-2 2 2z" fill="#e00"/></svg>
<div class="t" style="left:137px;top:353.99px;font-size:13.6px;line-height:13.6px;color:#1e1e1e;font-weight:normal;">Analysis Settings</div>
<svg class="a" style="left:101px;top:378.5px;" width="12" height="12" viewBox="0 0 12 12"><path d="M1 6.5l3 3.5L10.5 1.5" fill="none" stroke="#10a010" stroke-width="2.2"/></svg>
<svg class="a" style="left:112px;top:370px;" width="15" height="15" viewBox="0 0 15 15"><path d="M1 4l6-3 7 3v7l-7 3-6-3z" fill="#eee" stroke="#444" stroke-width="1"/><path d="M7 7l7-3v7l-7 3z" fill="#3b8ee0" stroke="#444" stroke-width="1"/><path d="M1 4l6 3v7" fill="none" stroke="#444" stroke-width="1"/></svg>
<svg class="a" style="left:119px;top:380px;" width="13" height="9" viewBox="0 0 13 9"><path d="M2 7l3-5M6 7l3-5" stroke="#c9961a" stroke-width="1.5"/></svg>
<div class="t" style="left:137px;top:373.99px;font-size:13.6px;line-height:13.6px;color:#1e1e1e;font-weight:normal;">Fixed Support</div>
<svg class="a" style="left:101px;top:398.5px;" width="12" height="12" viewBox="0 0 12 12"><path d="M1 6.5l3 3.5L10.5 1.5" fill="none" stroke="#10a010" stroke-width="2.2"/></svg>
<svg class="a" style="left:112px;top:390px;" width="15" height="15" viewBox="0 0 15 15"><path d="M1 4l6-3 7 3v7l-7 3-6-3z" fill="#eee" stroke="#444" stroke-width="1"/><path d="M7 7l7-3v7l-7 3z" fill="#3b8ee0" stroke="#444" stroke-width="1"/><path d="M1 4l6 3v7" fill="none" stroke="#444" stroke-width="1"/></svg>
<svg class="a" style="left:119px;top:400px;" width="13" height="9" viewBox="0 0 13 9"><path d="M2 7l3-5M6 7l3-5" stroke="#c9961a" stroke-width="1.5"/></svg>
<div class="t" style="left:137px;top:393.99px;font-size:13.6px;line-height:13.6px;color:#1e1e1e;font-weight:normal;">Fixed Support 2</div>
<svg class="a" style="left:101px;top:418.5px;" width="12" height="12" viewBox="0 0 12 12"><path d="M1 6.5l3 3.5L10.5 1.5" fill="none" stroke="#10a010" stroke-width="2.2"/></svg>
<svg class="a" style="left:112px;top:410px;" width="15" height="15" viewBox="0 0 15 15"><path d="M1 4l6-3 7 3v7l-7 3-6-3z" fill="#eee" stroke="#444" stroke-width="1"/><path d="M7 7l7-3v7l-7 3z" fill="#20c020" stroke="#444" stroke-width="1"/><path d="M1 4l6 3v7" fill="none" stroke="#444" stroke-width="1"/></svg>
<svg class="a" style="left:119px;top:420px;" width="13" height="9" viewBox="0 0 13 9"><path d="M9 1L3 6M3 6h4M3 6V2" fill="none" stroke="#d9a800" stroke-width="1.4"/></svg>
<div class="t" style="left:137px;top:413.99px;font-size:13.6px;line-height:13.6px;color:#1e1e1e;font-weight:normal;">Force</div>
<svg class="a" style="left:101px;top:438.5px;" width="12" height="12" viewBox="0 0 12 12"><path d="M1 6.5l3 3.5L10.5 1.5" fill="none" stroke="#10a010" stroke-width="2.2"/></svg>
<svg class="a" style="left:113px;top:430px;" width="18" height="19" viewBox="0 0 18 19"><path d="M1 3h7l2 2h7v13H1z" fill="#f7e38a" stroke="#555" stroke-width="1"/><path d="M1 3h7l2 2h7v2H1z" fill="#d9a800"/></svg>
<svg class="a" style="left:114px;top:435px;" width="18" height="16" viewBox="0 0 18 16"><path d="M1 4l7-3 9 3v8l-8 3.5-8-3.5z" fill="#404040"/><path d="M2 5l6 2.5v6.5L2 11.5z" fill="#20b0e0"/><path d="M9 7.5l7-3v7l-7 3z" fill="#f07020"/><path d="M9 10l7-3v2l-7 3z" fill="#e6d800"/><path d="M2.5 4.5l5.5-2.5 7.5 2.5-7 2.5z" fill="#40c0a0"/><path d="M4 6l3 1.5v2L4 8z" fill="#80d040"/></svg>
<div class="t" style="left:137px;top:433.30px;font-size:15px;line-height:15px;color:#111;font-weight:bold;">Solution (A6)</div>
<svg class="a" style="left:135px;top:458.5px;" width="12" height="12" viewBox="0 0 12 12"><path d="M1 6.5l3 3.5L10.5 1.5" fill="none" stroke="#10a010" stroke-width="2.2"/></svg>
<svg class="a" style="left:147px;top:452px;" width="18" height="18" viewBox="0 0 18 18"><path d="M1 3h7l2 2h7v12H1z" fill="#f7efb0" stroke="#555" stroke-width="1"/><path d="M1 3h7l2 2h7v2H1z" fill="#d9a800"/><text x="9" y="16" font-family="Liberation Serif" font-size="9" fill="#3b7ee0" text-anchor="middle" font-weight="bold">i</text></svg>
<div class="t" style="left:170.5px;top:454.33px;font-size:13.2px;line-height:13.2px;color:#1e1e1e;font-weight:normal;">Solution Information</div>
<div class="a" style="left:169px;top:471px;width:112px;height:19px;background:#eeeeee"></div>
<svg class="a" style="left:135px;top:478.5px;" width="12" height="12" viewBox="0 0 12 12"><path d="M1 6.5l3 3.5L10.5 1.5" fill="none" stroke="#10a010" stroke-width="2.2"/></svg>
<svg class="a" style="left:147px;top:472px;" width="18" height="16" viewBox="0 0 18 16"><path d="M1 4l7-3 9 3v8l-8 3.5-8-3.5z" fill="#404040"/><path d="M2 5l6 2.5v6.5L2 11.5z" fill="#20b0e0"/><path d="M9 7.5l7-3v7l-7 3z" fill="#f07020"/><path d="M9 10l7-3v2l-7 3z" fill="#e6d800"/><path d="M2.5 4.5l5.5-2.5 7.5 2.5-7 2.5z" fill="#40c0a0"/><path d="M4 6l3 1.5v2L4 8z" fill="#80d040"/></svg>
<div class="t" style="left:170.5px;top:474.07px;font-size:13.5px;line-height:13.5px;color:#1e1e1e;font-weight:normal;">Total Deformation</div>
<svg class="a" style="left:135px;top:498.5px;" width="12" height="12" viewBox="0 0 12 12"><path d="M1 6.5l3 3.5L10.5 1.5" fill="none" stroke="#10a010" stroke-width="2.2"/></svg>
<svg class="a" style="left:147px;top:492px;" width="18" height="16" viewBox="0 0 18 16"><path d="M1 4l7-3 9 3v8l-8 3.5-8-3.5z" fill="#404040"/><path d="M2 5l6 2.5v6.5L2 11.5z" fill="#20b0e0"/><path d="M9 7.5l7-3v7l-7 3z" fill="#f07020"/><path d="M9 10l7-3v2l-7 3z" fill="#e6d800"/><path d="M2.5 4.5l5.5-2.5 7.5 2.5-7 2.5z" fill="#40c0a0"/><path d="M4 6l3 1.5v2L4 8z" fill="#80d040"/></svg>
<div class="t" style="left:170.5px;top:494.07px;font-size:13.5px;line-height:13.5px;color:#1e1e1e;font-weight:normal;">Equivalent Stress</div>
<div class="a" style="left:0px;top:515px;width:370px;height:5px;background:#eeeeef"></div>
<div class="a" style="left:0px;top:520px;width:370px;height:26px;background:#eeeef2;border-top:1px solid #d8d8e2;box-sizing:border-box"></div>
<div class="t" style="left:6.7px;top:525.85px;font-size:14px;line-height:14px;color:#3c3c3c;font-weight:normal;transform:scaleX(1.0775);transform-origin:0 0;">Details of "Total Deformation"</div>
<div class="a" style="left:208px;top:529px;width:73px;height:8px;background-image:radial-gradient(circle at 1px 1px,#a8a8b2 0.55px,transparent 0.9px),radial-gradient(circle at 3.5px 3.5px,#a8a8b2 0.55px,transparent 0.9px);background-size:5px 5px"></div>
<svg class="a" style="left:287px;top:529px;" width="11" height="6" viewBox="0 0 11 6"><path d="M0 0h11L5.5 6z" fill="#1e1e1e"/></svg>
<svg class="a" style="left:307px;top:525px;" width="12" height="16" viewBox="0 0 12 16"><path d="M3 1h6M4 1v8h4V1M1 9.5h10M6 10v6" fill="none" stroke="#1e1e1e" stroke-width="1.6"/></svg>
<svg class="a" style="left:327px;top:526px;" width="14" height="14" viewBox="0 0 14 14"><rect x="1" y="1.5" width="12" height="11" fill="none" stroke="#1e1e1e" stroke-width="1.6"/><path d="M1 2.5h12" stroke="#1e1e1e" stroke-width="2"/></svg>
<svg class="a" style="left:348px;top:526px;" width="13" height="13" viewBox="0 0 13 13"><path d="M1.5 1.5l10 10M11.5 1.5l-10 10" stroke="#1e1e1e" stroke-width="1.8"/></svg>
<div class="a" style="left:0px;top:546px;width:370px;height:449px;background:#fff"></div>
<div class="a" style="left:17px;top:546px;width:353px;height:23px;background:#fff;border:1px solid #aaa;box-sizing:border-box"></div>
<svg class="a" style="left:2px;top:552px;" width="12" height="12" viewBox="0 0 12 12"><rect x="0.5" y="0.5" width="11" height="11" fill="#fff" stroke="#777"/><path d="M3 6h6" stroke="#222" stroke-width="1.3"/></svg>
<div class="t" style="left:21.5px;top:549.95px;font-size:14px;line-height:14px;color:#111;font-weight:bold;transform:scaleX(0.9164);transform-origin:0 0;">Scope</div>
<div class="a" style="left:17px;top:568px;width:152px;height:23px;background:#fff;border:1px solid #aaa;box-sizing:border-box"></div>
<div class="a" style="left:168px;top:568px;width:202px;height:23px;background:#e7e6e2;border:1px solid #aaa;box-sizing:border-box"></div>
<div class="t" style="left:21.5px;top:571.95px;font-size:14px;line-height:14px;color:#1e1e1e;font-weight:normal;">Scoping Method</div>
<div class="t" style="left:173px;top:571.95px;font-size:14px;line-height:14px;color:#1e1e1e;font-weight:normal;">Geometry Selection</div>
<div class="a" style="left:17px;top:590px;width:152px;height:24px;background:#fff;border:1px solid #aaa;box-sizing:border-box"></div>
<div class="a" style="left:168px;top:590px;width:202px;height:24px;background:#e7e6e2;border:1px solid #aaa;box-sizing:border-box"></div>
<div class="t" style="left:21.5px;top:593.95px;font-size:14px;line-height:14px;color:#1e1e1e;font-weight:normal;">Geometry</div>
<div class="t" style="left:173px;top:593.95px;font-size:14px;line-height:14px;color:#1e1e1e;font-weight:normal;">All Bodies</div>
<div class="a" style="left:17px;top:613px;width:353px;height:23px;background:#fff;border:1px solid #aaa;box-sizing:border-box"></div>
<svg class="a" style="left:2px;top:619px;" width="12" height="12" viewBox="0 0 12 12"><rect x="0.5" y="0.5" width="11" height="11" fill="#fff" stroke="#777"/><path d="M3 6h6" stroke="#222" stroke-width="1.3"/></svg>
<div class="t" style="left:21.5px;top:616.95px;font-size:14px;line-height:14px;color:#111;font-weight:bold;transform:scaleX(0.9916);transform-origin:0 0;">Definition</div>
<div class="a" style="left:17px;top:635px;width:152px;height:24px;background:#fff;border:1px solid #aaa;box-sizing:border-box"></div>
<div class="a" style="left:168px;top:635px;width:202px;height:24px;background:#fff;border:1px solid #aaa;box-sizing:border-box"></div>
<div class="t" style="left:21.5px;top:638.95px;font-size:14px;line-height:14px;color:#1e1e1e;font-weight:normal;">Type</div>
<div class="t" style="left:173px;top:638.95px;font-size:14px;line-height:14px;color:#1e1e1e;font-weight:normal;">Total Deformation</div>
<div class="a" style="left:17px;top:658px;width:152px;height:23px;background:#fff;border:1px solid #aaa;box-sizing:border-box"></div>
<div class="a" style="left:168px;top:658px;width:202px;height:23px;background:#fff;border:1px solid #aaa;box-sizing:border-box"></div>
<div class="t" style="left:21.5px;top:661.95px;font-size:14px;line-height:14px;color:#1e1e1e;font-weight:normal;">By</div>
<div class="t" style="left:173px;top:661.95px;font-size:14px;line-height:14px;color:#1e1e1e;font-weight:normal;">Time</div>
<div class="a" style="left:17px;top:680px;width:152px;height:24px;background:#fff;border:1px solid #aaa;box-sizing:border-box"></div>
<div class="a" style="left:168px;top:680px;width:202px;height:24px;background:#fff;border:1px solid #aaa;box-sizing:border-box"></div>
<div class="a" style="left:21px;top:685px;width:15px;height:14px;background:#fff;border:1px solid #c8c8c8;box-sizing:border-box"></div>
<div class="t" style="left:41.5px;top:683.95px;font-size:14px;line-height:14px;color:#1e1e1e;font-weight:normal;">Display Time</div>
<div class="t" style="left:173px;top:683.95px;font-size:14px;line-height:14px;color:#1e1e1e;font-weight:normal;">Last</div>
<div class="a" style="left:17px;top:703px;width:152px;height:23px;background:#fff;border:1px solid #aaa;box-sizing:border-box"></div>
<div class="a" style="left:168px;top:703px;width:202px;height:23px;background:#fff;border:1px solid #aaa;box-sizing:border-box"></div>
<div class="t" style="left:21.5px;top:706.95px;font-size:14px;line-height:14px;color:#1e1e1e;font-weight:normal;">Calculate Time History</div>
<div class="t" style="left:173px;top:706.95px;font-size:14px;line-height:14px;color:#1e1e1e;font-weight:normal;">Yes</div>
<div class="a" style="left:17px;top:725px;width:152px;height:24px;background:#fff;border:1px solid #aaa;box-sizing:border-box"></div>
<div class="a" style="left:168px;top:725px;width:202px;height:24px;background:#fff;border:1px solid #aaa;box-sizing:border-box"></div>
<div class="t" style="left:21.5px;top:728.95px;font-size:14px;line-height:14px;color:#1e1e1e;font-weight:normal;">Identifier</div>
<div class="t" style="left:173px;top:728.95px;font-size:14px;line-height:14px;color:#1e1e1e;font-weight:normal;"></div>
<div class="a" style="left:17px;top:748px;width:152px;height:23px;background:#fff;border:1px solid #aaa;box-sizing:border-box"></div>
<div class="a" style="left:168px;top:748px;width:202px;height:23px;background:#fff;border:1px solid #aaa;box-sizing:border-box"></div>
<div class="t" style="left:21.5px;top:751.95px;font-size:14px;line-height:14px;color:#1e1e1e;font-weight:normal;">Suppressed</div>
<div class="t" style="left:173px;top:751.95px;font-size:14px;line-height:14px;color:#1e1e1e;font-weight:normal;">No</div>
<div class="a" style="left:17px;top:770px;width:353px;height:24px;background:#fff;border:1px solid #aaa;box-sizing:border-box"></div>
<svg class="a" style="left:2px;top:776px;" width="12" height="12" viewBox="0 0 12 12"><rect x="0.5" y="0.5" width="11" height="11" fill="#fff" stroke="#777"/><path d="M3 6h6" stroke="#222" stroke-width="1.3"/></svg>
<div class="t" style="left:21.5px;top:773.95px;font-size:14px;line-height:14px;color:#111;font-weight:bold;transform:scaleX(0.8998);transform-origin:0 0;">Results</div>
<div class="a" style="left:17px;top:793px;width:152px;height:23px;background:#fff;border:1px solid #aaa;box-sizing:border-box"></div>
<div class="a" style="left:168px;top:793px;width:202px;height:23px;background:#e7e6e2;border:1px solid #aaa;box-sizing:border-box"></div>
<div class="a" style="left:21px;top:798px;width:15px;height:14px;background:#fff;border:1px solid #c8c8c8;box-sizing:border-box"></div>
<div class="t" style="left:41.5px;top:796.95px;font-size:14px;line-height:14px;color:#1e1e1e;font-weight:normal;">Minimum</div>
<div class="t" style="left:173px;top:796.95px;font-size:14px;line-height:14px;color:#1e1e1e;font-weight:normal;">0. mm</div>
<div class="a" style="left:17px;top:815px;width:152px;height:24px;background:#fff;border:1px solid #aaa;box-sizing:border-box"></div>
<div class="a" style="left:168px;top:815px;width:202px;height:24px;background:#e7e6e2;border:1px solid #aaa;box-sizing:border-box"></div>
<div class="a" style="left:21px;top:820px;width:15px;height:14px;background:#fff;border:1px solid #c8c8c8;box-sizing:border-box"></div>
<div class="t" style="left:41.5px;top:818.95px;font-size:14px;line-height:14px;color:#1e1e1e;font-weight:normal;">Maximum</div>
<div class="t" style="left:173px;top:818.95px;font-size:14px;line-height:14px;color:#1e1e1e;font-weight:normal;">22.701 mm</div>
<div class="a" style="left:17px;top:838px;width:152px;height:23px;background:#fff;border:1px solid #aaa;box-sizing:border-box"></div>
<div class="a" style="left:168px;top:838px;width:202px;height:23px;background:#e7e6e2;border:1px solid #aaa;box-sizing:border-box"></div>
<div class="a" style="left:21px;top:843px;width:15px;height:14px;background:#fff;border:1px solid #c8c8c8;box-sizing:border-box"></div>
<div class="t" style="left:41.5px;top:841.95px;font-size:14px;line-height:14px;color:#1e1e1e;font-weight:normal;">Average</div>
<div class="t" style="left:173px;top:841.95px;font-size:14px;line-height:14px;color:#1e1e1e;font-weight:normal;">3.8214 mm</div>
<div class="a" style="left:17px;top:860px;width:152px;height:24px;background:#fff;border:1px solid #aaa;box-sizing:border-box"></div>
<div class="a" style="left:168px;top:860px;width:202px;height:24px;background:#e7e6e2;border:1px solid #aaa;box-sizing:border-box"></div>
<div class="t" style="left:21.5px;top:863.95px;font-size:14px;line-height:14px;color:#1e1e1e;font-weight:normal;">Minimum Occurs On</div>
<div class="t" style="left:173px;top:863.95px;font-size:14px;line-height:14px;color:#1e1e1e;font-weight:normal;">bridge-FreeParts|NONE</div>
<div class="a" style="left:17px;top:883px;width:152px;height:23px;background:#fff;border:1px solid #aaa;box-sizing:border-box"></div>
<div class="a" style="left:168px;top:883px;width:202px;height:23px;background:#e7e6e2;border:1px solid #aaa;box-sizing:border-box"></div>
<div class="t" style="left:21.5px;top:886.95px;font-size:14px;line-height:14px;color:#1e1e1e;font-weight:normal;">Maximum Occurs On</div>
<div class="t" style="left:173px;top:886.95px;font-size:14px;line-height:14px;color:#1e1e1e;font-weight:normal;">bridge-FreeParts|NONE</div>
<div class="a" style="left:17px;top:905px;width:353px;height:23px;background:#fff;border:1px solid #aaa;box-sizing:border-box"></div>
<svg class="a" style="left:2px;top:911px;" width="12" height="12" viewBox="0 0 12 12"><rect x="0.5" y="0.5" width="11" height="11" fill="#fff" stroke="#777"/><path d="M3 6h6" stroke="#222" stroke-width="1.3"/><path d="M6 3v6" stroke="#222" stroke-width="1.3"/></svg>
<div class="t" style="left:21.5px;top:908.95px;font-size:14px;line-height:14px;color:#111;font-weight:bold;transform:scaleX(0.9872);transform-origin:0 0;">Information</div>
<div class="a" style="left:369px;top:546px;width:1px;height:383px;background:#aaa"></div>
<div class="a" style="left:0px;top:993px;width:370px;height:25px;background:#eeeef2;border-top:1px solid #d8d8e4;box-sizing:border-box"></div>
<div class="a" style="left:0px;top:994px;width:58px;height:24px;background:#f5f5f7;border:1px solid #d8d8e4;border-top:none;box-sizing:border-box"></div>
<div class="t" style="left:8px;top:998.15px;font-size:14px;line-height:14px;color:#3a8ee6;font-weight:normal;">Details</div>
<div class="t" style="left:66px;top:998.15px;font-size:14px;line-height:14px;color:#444;font-weight:normal;">Section Planes</div>
<div class="t" style="left:176px;top:998.15px;font-size:14px;line-height:14px;color:#444;font-weight:normal;">Manage Views</div>
<div class="a" style="left:370px;top:172px;width:5px;height:846px;background:#eeeef2"></div>
<div class="a" style="left:375px;top:172px;width:1545px;height:32px;background:#eeeef2"></div>
<div class="a" style="left:387px;top:177px;width:7px;height:24px;background-image:radial-gradient(circle at 1px 1px,#a8a8b2 0.55px,transparent 0.9px),radial-gradient(circle at 3.5px 3.5px,#a8a8b2 0.55px,transparent 0.9px);background-size:5px 5px"></div>
<svg class="a" style="left:406px;top:178px;" width="18" height="18" viewBox="0 0 18 18"><circle cx="7.5" cy="7.5" r="6" fill="#fff" stroke="#333" stroke-width="1.8"/><path d="M12 12l5 5" stroke="#333" stroke-width="2.4"/><path d="M4 7.5h6M4 7.5l3-3M4 7.5l3 3" fill="none" stroke="#d9a000" stroke-width="1.6"/></svg>
<svg class="a" style="left:437px;top:178px;" width="18" height="18" viewBox="0 0 18 18"><circle cx="7.5" cy="7.5" r="6" fill="#fff" stroke="#999" stroke-width="1.6"/><path d="M12 12l5 5" stroke="#999" stroke-width="2.2"/><path d="M5 7.5h6M11 7.5l-3-3M11 7.5l-3 3" fill="none" stroke="#bbb" stroke-width="1.4"/></svg>
<div class="a" style="left:460px;top:176px;width:1px;height:24px;background:#c8c8d0"></div>
<svg class="a" style="left:469px;top:179px;" width="18" height="18" viewBox="0 0 18 18"><path d="M9 1l8 3.5v9L9 17l-8-3.5v-9z" fill="#555"/><path d="M1 4.5L9 8l8-3.5L9 1z" fill="#999"/><path d="M9 8v9l8-3.5v-9z" fill="#777"/></svg>
<div class="a" style="left:493px;top:174px;width:27px;height:27px;background:#dbe6f4;border:1.5px solid #3b8ee0;box-sizing:border-box"></div>
<svg class="a" style="left:498px;top:179px;" width="18" height="18" viewBox="0 0 18 18"><path d="M9 1l8 3.5v9L9 17l-8-3.5v-9z" fill="#9a9a9a"/><path d="M1 4.5L9 8l8-3.5L9 1z" fill="#d0d0d0"/><path d="M9 8v9l8-3.5v-9z" fill="#b0b0b0"/></svg>
<svg class="a" style="left:525px;top:178px;" width="18" height="18" viewBox="0 0 18 18"><path d="M2 9l6-3 6 3v5l-6 3-6-3z" fill="#d9a800" stroke="#333" stroke-width="1"/><path d="M8 2l5-1.5 4 2v4l-5 2-4-2z" fill="#fff" stroke="#333" stroke-width="1"/><path d="M14 11a5 5 0 0 0 3-5" fill="none" stroke="#333" stroke-width="1.2"/></svg>
<div class="a" style="left:550px;top:176px;width:1px;height:24px;background:#c8c8d0"></div>
<svg class="a" style="left:560px;top:178px;" width="18" height="18" viewBox="0 0 18 18"><rect x="1" y="1" width="7" height="7" fill="#fff" stroke="#666"/><rect x="9" y="9" width="8" height="8" fill="#fff" stroke="#666"/><path d="M13 9v8M9 13h8" stroke="#666"/><path d="M9 3l4 4" stroke="#aaa"/></svg>
<div class="a" style="left:585px;top:176px;width:1px;height:24px;background:#c8c8d0"></div>
<div class="a" style="left:590px;top:174px;width:41px;height:27px;background:#eef2fa;border:1.5px solid #3b8ee0;box-sizing:border-box"></div>
<svg class="a" style="left:594px;top:179px;" width="18" height="18" viewBox="0 0 18 18"><path d="M3 9a6 6 0 0 1 10.5-4" fill="none" stroke="#333" stroke-width="1.6"/><path d="M15 9a6 6 0 0 1-10.5 4" fill="none" stroke="#333" stroke-width="1.6"/><path d="M12 2l3 3.5-4 .5z" fill="#d9a000"/><path d="M6 16l-3-3.5 4-.5z" fill="#d9a000"/></svg>
<svg class="a" style="left:618px;top:186px;" width="8" height="4" viewBox="0 0 8 4"><path d="M0 0h8L4 4z" fill="#666"/></svg>
<svg class="a" style="left:636px;top:178px;" width="18" height="18" viewBox="0 0 18 18"><path d="M9 1l3 3.5H6zM9 17l3-3.5H6zM1 9l3.5-3v6zM17 9l-3.5-3v6z" fill="#d9a000"/><circle cx="9" cy="9" r="1.5" fill="#333"/><path d="M9 4v10M4 9h10" stroke="#333" stroke-width="1"/></svg>
<svg class="a" style="left:664px;top:178px;" width="18" height="18" viewBox="0 0 18 18"><circle cx="7.5" cy="7.5" r="6" fill="#fff" stroke="#333" stroke-width="1.8"/><path d="M12 12l5 5" stroke="#333" stroke-width="2.4"/><path d="M7.5 3.5v8M5 6l2.5-2.5L10 6M5 9l2.5 2.5L10 9" fill="none" stroke="#d9a000" stroke-width="1.4"/></svg>
<svg class="a" style="left:691px;top:178px;" width="18" height="18" viewBox="0 0 18 18"><circle cx="7.5" cy="7.5" r="6" fill="#fff" stroke="#333" stroke-width="1.8"/><path d="M12 12l5 5" stroke="#333" stroke-width="2.4"/><circle cx="7.5" cy="7.5" r="4" fill="#d9a000"/><path d="M7.5 5v5M5 7.5h5" stroke="#333" stroke-width="1.3"/></svg>
<svg class="a" style="left:718px;top:178px;" width="18" height="18" viewBox="0 0 18 18"><circle cx="7.5" cy="7.5" r="6" fill="#fff" stroke="#333" stroke-width="1.8"/><path d="M12 12l5 5" stroke="#333" stroke-width="2.4"/><circle cx="7.5" cy="7.5" r="4" fill="#4a90e2"/><path d="M5 6l2.5 2 2.5-2v4H5z" fill="#2d5a90"/></svg>
<svg class="a" style="left:745px;top:178px;" width="18" height="18" viewBox="0 0 18 18"><circle cx="7.5" cy="7.5" r="6" fill="#fff" stroke="#333" stroke-width="1.8"/><path d="M12 12l5 5" stroke="#333" stroke-width="2.4"/><circle cx="7.5" cy="7.5" r="4" fill="#20b040"/><path d="M5 6l2.5 2 2.5-2v4H5z" fill="#4a90e2"/></svg>
<div class="a" style="left:772px;top:176px;width:1px;height:24px;background:#c8c8d0"></div>
<div class="t" style="left:781.5px;top:181.15px;font-size:14px;line-height:14px;color:#1e1e1e;font-weight:normal;transform:scaleX(0.9895);transform-origin:0 0;">Select</div>
<svg class="a" style="left:829px;top:178px;" width="18" height="18" viewBox="0 0 18 18"><rect x="1" y="1" width="8" height="8" fill="none" stroke="#e02020" stroke-width="1" stroke-dasharray="1.5 1"/><path d="M6 5l10 5-4 1 3 5-2 1-3-5-3 3z" fill="#222"/></svg>
<div class="t" style="left:851px;top:181.15px;font-size:14px;line-height:14px;color:#1e1e1e;font-weight:normal;transform:scaleX(1.0566);transform-origin:0 0;">Mode</div>
<svg class="a" style="left:893px;top:186px;" width="7" height="4" viewBox="0 0 7 4"><path d="M0 0h7L3.5 4z" fill="#666"/></svg>
<svg class="a" style="left:913px;top:178px;" width="20" height="18" viewBox="0 0 20 18"><path d="M1 2h7M4.5 2v5M1 10h7M4.5 10v7M10 2h7M13.5 2v8M10 13l7 4" stroke="#8a8a8a" stroke-width="1.4" fill="none"/></svg>
<svg class="a" style="left:942px;top:178px;" width="18" height="18" viewBox="0 0 18 18"><path d="M1 4l4-3h12v12l-4 4H1z" fill="#fff" stroke="#888" stroke-width="1.1"/><path d="M1 4h12v13M13 4l4-3" fill="none" stroke="#888" stroke-width="1.1"/><path d="M6 8l4 6-1.5-2.5L11 12" stroke="#555" stroke-width="1.2" fill="none"/></svg>
<svg class="a" style="left:970px;top:178px;" width="18" height="18" viewBox="0 0 18 18"><path d="M1 4l4-3h12v12l-4 4H1z" fill="#fff" stroke="#888" stroke-width="1.1"/><path d="M1 4h12v13M13 4l4-3" fill="none" stroke="#888" stroke-width="1.1"/><path d="M6 8l4 6-1.5-2.5L11 12" stroke="#555" stroke-width="1.2" fill="none"/></svg>
<svg class="a" style="left:998px;top:178px;" width="18" height="18" viewBox="0 0 18 18"><path d="M1 4l4-3h12v12l-4 4H1z" fill="#fff" stroke="#888" stroke-width="1.1"/><path d="M1 4h12v13M13 4l4-3" fill="none" stroke="#888" stroke-width="1.1"/><path d="M6 8l4 6-1.5-2.5L11 12" stroke="#555" stroke-width="1.2" fill="none"/></svg>
<svg class="a" style="left:1025px;top:178px;" width="18" height="18" viewBox="0 0 18 18"><path d="M1 4l4-3h12v12l-4 4H1z" fill="#bbb" stroke="#777" stroke-width="1.1"/><path d="M1 4h12v13M13 4l4-3" fill="none" stroke="#777" stroke-width="1.1"/><path d="M6 8l4 6" stroke="#555" stroke-width="1.2"/></svg>
<svg class="a" style="left:1052px;top:178px;" width="18" height="18" viewBox="0 0 18 18"><path d="M1 4l4-3h12v12l-4 4H1z" fill="#b8d4f0" stroke="#333" stroke-width="1.2"/><path d="M1 4l4-3h12l-4 3z" fill="#4a90e2"/><path d="M5 4v13M9 4v13M1 8h12M1 12h12M13 4l4-3" stroke="#333" stroke-width="0.9" fill="none"/><path d="M7 8l3 5" stroke="#1e3a80" stroke-width="1.4"/></svg>
<svg class="a" style="left:1080px;top:178px;" width="18" height="18" viewBox="0 0 18 18"><path d="M1 4l4-3h12v12l-4 4H1z" fill="#b8d4f0" stroke="#333" stroke-width="1.2"/><path d="M1 4l4-3h12l-4 3z" fill="#20c020"/><path d="M5 4v13M9 4v13M1 8h12M1 12h12M13 4l4-3" stroke="#333" stroke-width="0.9" fill="none"/><path d="M7 8l3 5" stroke="#1e3a80" stroke-width="1.4"/></svg>
<svg class="a" style="left:1108px;top:178px;" width="18" height="18" viewBox="0 0 18 18"><path d="M1 4l4-3h12v12l-4 4H1z" fill="#b8d4f0" stroke="#333" stroke-width="1.2"/><path d="M1 4l4-3h12l-4 3z" fill="#20c020"/><path d="M5 4v13M9 4v13M1 8h12M1 12h12M13 4l4-3" stroke="#333" stroke-width="0.9" fill="none"/><path d="M7 8l3 5" stroke="#1e3a80" stroke-width="1.4"/></svg>
<svg class="a" style="left:1134px;top:178px;" width="18" height="18" viewBox="0 0 18 18"><text x="0" y="7" font-family="Liberation Sans" font-size="6" fill="#aaa">X.Y.Z</text><path d="M8 9l5 6-2 .5 1.5 2.5" stroke="#bbb" stroke-width="1.4" fill="none"/></svg>
<svg class="a" style="left:1162px;top:178px;" width="18" height="18" viewBox="0 0 18 18"><path d="M1 1h13l3 4-3 4H1z" fill="#fff" stroke="#333" stroke-width="1.1"/><text x="2.5" y="8" font-family="Liberation Sans" font-size="6.5" font-weight="bold" fill="#333">100</text><path d="M8 10l4 7" stroke="#d9a000" stroke-width="2"/></svg>
<svg class="a" style="left:1190px;top:178px;" width="18" height="18" viewBox="0 0 18 18"><path d="M1 2h13l3 5-3 6H1z" fill="#e8e8e8" stroke="#aaa" stroke-width="1.1"/><text x="2.5" y="10" font-family="Liberation Sans" font-size="6" fill="#999">Abc</text><path d="M13 12l3 4" stroke="#aaa" stroke-width="1.5"/></svg>
<div class="a" style="left:1215px;top:176px;width:1px;height:24px;background:#c8c8d0"></div>
<svg class="a" style="left:1225px;top:177px;" width="18" height="18" viewBox="0 0 18 18"><rect x="0.6" y="2" width="16.5" height="15.5" fill="#f0c040" stroke="#444" stroke-width="1.2"/><path d="M5 2.5h8" stroke="#555" stroke-width="1.3"/><path d="M8.5 1v2" stroke="#555"/></svg>
<div class="t" style="left:1246.5px;top:181.15px;font-size:14px;line-height:14px;color:#1e1e1e;font-weight:normal;transform:scaleX(1.0681);transform-origin:0 0;">Clipboard</div>
<svg class="a" style="left:1313px;top:186px;" width="7" height="4" viewBox="0 0 7 4"><path d="M0 0h7L3.5 4z" fill="#666"/></svg>
<div class="t" style="left:1336px;top:181.15px;font-size:14px;line-height:14px;color:#1e1e1e;font-weight:normal;transform:scaleX(1.0863);transform-origin:0 0;">[ Empty ]</div>
<div class="a" style="left:1404px;top:176px;width:1px;height:24px;background:#c8c8d0"></div>
<svg class="a" style="left:1413px;top:178px;" width="18" height="18" viewBox="0 0 18 18"><path d="M2 6l7-3 8 3v7l-8 4-7-4z" fill="#fff" stroke="#444" stroke-width="1"/><path d="M2 6l7 4v7l-7-4z" fill="#20d020" stroke="#444" stroke-width="1"/><path d="M9 10l8-4v7l-8 4z" fill="#fff" stroke="#444" stroke-width="1"/><path d="M9 1v5M6.5 3.5h5" stroke="#d9a000" stroke-width="1.2"/></svg>
<div class="t" style="left:1435px;top:181.15px;font-size:14px;line-height:14px;color:#1e1e1e;font-weight:normal;transform:scaleX(1.0096);transform-origin:0 0;">Extend</div>
<svg class="a" style="left:1482px;top:186px;" width="7" height="4" viewBox="0 0 7 4"><path d="M0 0h7L3.5 4z" fill="#666"/></svg>
<svg class="a" style="left:1505px;top:178px;" width="18" height="18" viewBox="0 0 18 18"><path d="M9 1a4.5 4.5 0 0 1 4.5 4.5C13.5 9 9 13 9 13S4.5 9 4.5 5.5A4.5 4.5 0 0 1 9 1z" fill="#e0a800"/><circle cx="9" cy="5.5" r="1.6" fill="#fff"/><path d="M1 17h16M1 17v-2M17 17v-2" stroke="#444" stroke-width="1.1" fill="none"/></svg>
<div class="t" style="left:1526px;top:181.15px;font-size:14px;line-height:14px;color:#1e1e1e;font-weight:normal;transform:scaleX(1.0146);transform-origin:0 0;">Select By</div>
<svg class="a" style="left:1589px;top:186px;" width="7" height="4" viewBox="0 0 7 4"><path d="M0 0h7L3.5 4z" fill="#666"/></svg>
<svg class="a" style="left:1610px;top:178px;" width="18" height="18" viewBox="0 0 18 18"><path d="M0.5 8h5M2.5 6l3 2-3 2" stroke="#d9a000" stroke-width="1.2" fill="none"/><path d="M7 5l3-3h7v10l-3 3H7z" fill="#20c020" stroke="#333" stroke-width="1"/><path d="M7 5h7v10M14 5l3-3" fill="none" stroke="#333" stroke-width="1"/></svg>
<div class="t" style="left:1631.5px;top:181.15px;font-size:14px;line-height:14px;color:#1e1e1e;font-weight:normal;transform:scaleX(1.0710);transform-origin:0 0;">Convert</div>
<svg class="a" style="left:1686px;top:186px;" width="7" height="4" viewBox="0 0 7 4"><path d="M0 0h7L3.5 4z" fill="#666"/></svg>
<svg class="a" style="left:1705px;top:192px;" width="10" height="6" viewBox="0 0 10 6"><path d="M0 0h10L5 6z" fill="#1e1e1e"/></svg>
<div class="a" style="left:375px;top:204px;width:1545px;height:686px;background:linear-gradient(#6a8bdc,#ffffff)"></div>
<div class="t" style="left:394px;top:224.31px;font-size:14.4px;line-height:14.4px;color:#111;font-weight:bold;transform:scaleX(1.0006);transform-origin:0 0;">A: Static Structural</div>
<div class="t" style="left:394px;top:243.65px;font-size:14px;line-height:14px;color:#111;font-weight:normal;transform:scaleX(1.0847);transform-origin:0 0;">Total Deformation</div>
<div class="t" style="left:394px;top:262.45px;font-size:14px;line-height:14px;color:#111;font-weight:normal;transform:scaleX(1.0672);transform-origin:0 0;">Type: Total Deformation</div>
<div class="t" style="left:394px;top:281.25px;font-size:14px;line-height:14px;color:#111;font-weight:normal;transform:scaleX(1.1072);transform-origin:0 0;">Unit: mm</div>
<div class="t" style="left:394px;top:300.05px;font-size:14px;line-height:14px;color:#111;font-weight:normal;transform:scaleX(0.9992);transform-origin:0 0;">Time: 1 s</div>
<div class="t" style="left:394px;top:318.85px;font-size:14px;line-height:14px;color:#111;font-weight:normal;transform:scaleX(0.9999);transform-origin:0 0;">3/5/2026 7:01 PM</div>
<div class="a" style="left:393px;top:360px;width:21px;height:193px;background:#000"></div>
<div class="a" style="left:395px;top:362px;width:17px;height:21px;background:#ff0000"></div>
<div class="a" style="left:395px;top:384px;width:17px;height:20px;background:#ffaa00"></div>
<div class="a" style="left:395px;top:405px;width:17px;height:20px;background:#ffff00"></div>
<div class="a" style="left:395px;top:426px;width:17px;height:20px;background:#aaff00"></div>
<div class="a" style="left:395px;top:447px;width:17px;height:20px;background:#00ff00"></div>
<div class="a" style="left:395px;top:468px;width:17px;height:20px;background:#00ffaa"></div>
<div class="a" style="left:395px;top:489px;width:17px;height:20px;background:#00ffff"></div>
<div class="a" style="left:395px;top:510px;width:17px;height:20px;background:#00aaff"></div>
<div class="a" style="left:395px;top:531px;width:17px;height:20px;background:#0000ff"></div>
<div class="t" style="left:423px;top:354.65px;font-size:14px;line-height:14px;color:#111;font-weight:bold;transform:scaleX(1.0955);transform-origin:0 0;">22.701 Max</div>
<div class="t" style="left:424px;top:375.37px;font-size:14px;line-height:14px;color:#111;font-weight:normal;transform:scaleX(0.9576);transform-origin:0 0;">20.179</div>
<div class="t" style="left:424px;top:396.09px;font-size:14px;line-height:14px;color:#111;font-weight:normal;transform:scaleX(0.9576);transform-origin:0 0;">17.656</div>
<div class="t" style="left:424px;top:416.81px;font-size:14px;line-height:14px;color:#111;font-weight:normal;transform:scaleX(0.9576);transform-origin:0 0;">15.134</div>
<div class="t" style="left:424px;top:437.53px;font-size:14px;line-height:14px;color:#111;font-weight:normal;transform:scaleX(0.9576);transform-origin:0 0;">12.612</div>
<div class="t" style="left:424px;top:458.25px;font-size:14px;line-height:14px;color:#111;font-weight:normal;transform:scaleX(0.9576);transform-origin:0 0;">10.089</div>
<div class="t" style="left:424px;top:478.97px;font-size:14px;line-height:14px;color:#111;font-weight:normal;transform:scaleX(0.9753);transform-origin:0 0;">7.567</div>
<div class="t" style="left:424px;top:499.69px;font-size:14px;line-height:14px;color:#111;font-weight:normal;transform:scaleX(0.9576);transform-origin:0 0;">5.0447</div>
<div class="t" style="left:424px;top:520.41px;font-size:14px;line-height:14px;color:#111;font-weight:normal;transform:scaleX(0.9576);transform-origin:0 0;">2.5223</div>
<div class="t" style="left:423px;top:541.13px;font-size:14px;line-height:14px;color:#111;font-weight:bold;transform:scaleX(1.0761);transform-origin:0 0;">0 Min</div>
<svg class="a" style="left:1766px;top:230px;" width="48" height="40" viewBox="0 0 48 40"><path d="M1 37.5L15.5 2h9.5L10.5 37.5z" fill="#f8f6f4"/><path d="M21.5 13.5L27 1l15 36.5H31.8z" fill="#f8f6f4"/></svg>
<svg class="a" style="left:1808px;top:236px;" width="106" height="40" viewBox="0 0 106 40"><text x="2" y="31.3" font-family="Liberation Sans" font-weight="bold" font-size="47" fill="#f8f6f4" textLength="100" lengthAdjust="spacingAndGlyphs">nsys</text></svg>
<div class="t" style="left:1828px;top:278.31px;font-size:23.5px;line-height:23.5px;color:#f8f6f4;font-weight:bold;transform:scaleX(0.9230);transform-origin:0 0;">2022 R1</div>
<div class="a" style="left:900px;top:834px;width:495px;height:14px;background:#fff;border:1px solid #000;box-sizing:border-box"></div>
<div class="a" style="left:900px;top:834px;width:124px;height:14px;background:#000"></div>
<div class="a" style="left:1146px;top:834px;width:125px;height:14px;background:#000"></div>
<div class="t" style="left:886.5px;top:818.45px;font-size:14px;line-height:14px;color:#111;font-weight:normal;transform:scaleX(0.9910);transform-origin:0 0;">0.00</div>
<div class="t" style="left:1125.5px;top:818.45px;font-size:14px;line-height:14px;color:#111;font-weight:normal;transform:scaleX(0.9693);transform-origin:0 0;">250.00</div>
<div class="t" style="left:1374px;top:818.45px;font-size:14px;line-height:14px;color:#111;font-weight:normal;transform:scaleX(1.0208);transform-origin:0 0;">500.00 (mm)</div>
<div class="t" style="left:1002px;top:853.75px;font-size:14px;line-height:14px;color:#111;font-weight:normal;transform:scaleX(0.9693);transform-origin:0 0;">125.00</div>
<div class="t" style="left:1250.5px;top:853.75px;font-size:14px;line-height:14px;color:#111;font-weight:normal;transform:scaleX(0.9693);transform-origin:0 0;">375.00</div>
<svg class="a" style="left:1700px;top:770px;" width="130" height="115" viewBox="0 0 130 115">
<defs><radialGradient id="bb" cx="40%" cy="35%" r="65%"><stop offset="0" stop-color="#3030ff"/><stop offset="1" stop-color="#0000a0"/></radialGradient>
<radialGradient id="cb" cx="60%" cy="40%" r="60%"><stop offset="0" stop-color="#00f0f0"/><stop offset="1" stop-color="#008c9c"/></radialGradient></defs>
<text x="8.5" y="20.5" font-family="Liberation Sans" font-size="14" fill="#ff2020">X</text>
<path d="M42 15.5h66v5.5H42z" fill="#c00000"/><path d="M42 16.5h40v3.5H42z" fill="#a00000"/>
<path d="M23.6 18L43.5 10.5v16z" fill="#7a0000"/>
<path d="M103.5 16v17" stroke="#0000d0" stroke-width="4.5"/>
<path d="M104.5 30v47" stroke="#007000" stroke-width="5"/>
<circle cx="104.5" cy="36.7" r="8.3" fill="url(#bb)"/>
<path d="M99 77h17l-8.4 20z" fill="#005a00"/>
<text x="106.5" y="111.4" font-family="Liberation Sans" font-size="13" fill="#20c020">Y</text>
<circle cx="67.2" cy="67.2" r="8.2" fill="url(#cb)"/></svg>
<svg class="a" style="left:600px;top:440px;" width="1080" height="220" viewBox="0 0 1080 220"><defs><pattern id="m1" width="18" height="15" patternUnits="userSpaceOnUse" patternTransform="rotate(6)">
<path d="M0 0L9 7.5L18 0M0 15L9 7.5L18 15M0 7.5H18M0 0H18" stroke="#000" stroke-width="1.0" fill="none"/>
<path d="M0 0L9 7.5L0 7.5Z" fill="#000" fill-opacity="0.3"/><path d="M9 7.5L18 15H9Z" fill="#000" fill-opacity="0.38"/><path d="M9 7.5L18 0V7.5Z" fill="#fff" fill-opacity="0.06"/>
</pattern>
<pattern id="m2" width="23" height="19" patternUnits="userSpaceOnUse" patternTransform="rotate(-19)">
<path d="M0 0L23 19M0 9.5H23M11.5 0V19" stroke="#000" stroke-width="0.9" fill="none"/>
<path d="M11.5 9.5L23 19H11.5Z" fill="#000" fill-opacity="0.15"/>
</pattern>
<clipPath id="bc"><path d="M638.0 640.0 L641.0 587.5 L1013.0 463.5 L1013.0 462.0 L1030.0 461.5 L1264.0 459.5 L1281.0 457.5 L1657.5 575.0 L1659.5 580.0 L1659.0 622.0 L1650.0 626.0 L1400.0 629.5 L638.0 640.0 Z M807.0 584.8 L1013.0 516.0 L1013.0 582.8 Z M1030.0 512.5 L1264.5 510.5 L1264.5 580.4 L1030.0 582.7 Z M1281.0 513.5 L1495.0 578.1 L1281.0 580.2 Z M736.5 611.5 L773.0 600.8 L809.5 611.5 L773.0 622.2 Z M861.7 610.0 L898.2 599.3 L934.7 610.0 L898.2 620.7 Z M986.9 608.6 L1013.0 601.0 L1013.0 616.3 Z M1030.5 600.0 L1059.9 608.6 L1030.5 617.2 Z M1112.1 607.2 L1148.6 596.5 L1185.1 607.2 L1148.6 617.9 Z M1237.3 605.8 L1264.5 597.8 L1264.5 613.7 Z M1281.0 597.2 L1310.3 605.8 L1281.0 614.3 Z M1362.5 604.3 L1399.0 593.6 L1435.5 604.3 L1399.0 615.0 Z M1487.7 602.9 L1524.2 592.2 L1560.7 602.9 L1524.2 613.6 Z M697.5 622.6 L705.0 620.3 L715.0 620.3 L722.5 622.6 L715.0 624.9 L705.0 624.9 Z M822.7 600.0 L830.2 597.7 L840.2 597.7 L847.7 600.0 L840.2 602.3 L830.2 602.3 Z M822.7 621.2 L830.2 618.9 L840.2 618.9 L847.7 621.2 L840.2 623.5 L830.2 623.5 Z M947.9 598.5 L955.4 596.2 L965.4 596.2 L972.9 598.5 L965.4 600.8 L955.4 600.8 Z M947.9 619.7 L955.4 617.4 L965.4 617.4 L972.9 619.7 L965.4 622.0 L955.4 622.0 Z M1073.1 597.1 L1080.6 594.8 L1090.6 594.8 L1098.1 597.1 L1090.6 599.4 L1080.6 599.4 Z M1073.1 618.3 L1080.6 616.0 L1090.6 616.0 L1098.1 618.3 L1090.6 620.6 L1080.6 620.6 Z M1198.3 595.7 L1205.8 593.4 L1215.8 593.4 L1223.3 595.7 L1215.8 598.0 L1205.8 598.0 Z M1198.3 616.9 L1205.8 614.6 L1215.8 614.6 L1223.3 616.9 L1215.8 619.2 L1205.8 619.2 Z M1323.5 594.2 L1331.0 591.9 L1341.0 591.9 L1348.5 594.2 L1341.0 596.5 L1331.0 596.5 Z M1323.5 615.4 L1331.0 613.1 L1341.0 613.1 L1348.5 615.4 L1341.0 617.7 L1331.0 617.7 Z M1448.7 592.8 L1456.2 590.5 L1466.2 590.5 L1473.7 592.8 L1466.2 595.1 L1456.2 595.1 Z M1448.7 614.0 L1456.2 611.7 L1466.2 611.7 L1473.7 614.0 L1466.2 616.3 L1456.2 616.3 Z M1573.9 591.4 L1581.4 589.1 L1591.4 589.1 L1598.9 591.4 L1591.4 593.7 L1581.4 593.7 Z M1573.9 612.6 L1581.4 610.3 L1591.4 610.3 L1598.9 612.6 L1591.4 614.9 L1581.4 614.9 Z M654.0 603.4 L666.0 611.0 L654.0 618.4 Z M1631.0 596.4 L1643.8 591.6 L1643.8 603.6 Z M1030.5 479.0 L1059.7 488.0 L1030.5 497.0 Z M1264.5 474.7 L1236.4 484.8 L1264.5 491.9 Z M1108.0 486.5 L1152.0 475.5 L1196.0 484.0 L1152.0 493.5 Z M1073.5 476.8 L1080.7 474.6 L1090.3 474.6 L1097.5 476.8 L1090.3 479.0 L1080.7 479.0 Z M1071.0 497.5 L1078.2 495.3 L1087.8 495.3 L1095.0 497.5 L1087.8 499.7 L1078.2 499.7 Z M1196.5 475.5 L1203.7 473.3 L1213.3 473.3 L1220.5 475.5 L1213.3 477.7 L1203.7 477.7 Z M1196.7 495.3 L1203.9 493.1 L1213.5 493.1 L1220.7 495.3 L1213.5 497.5 L1203.9 497.5 Z M748.7 568.8 L768.5 570.5 L750.8 586.0 L724.8 586.0 Z M837.0 539.0 L860.5 539.0 L831.4 562.0 L810.0 562.0 Z M924.4 510.0 L951.5 510.0 L925.0 530.0 L900.0 530.0 Z M1013.0 485.0 L1013.0 499.4 L996.7 497.0 Z M777.5 556.0 L782.3 553.8 L788.7 553.8 L793.5 556.0 L788.7 558.2 L782.3 558.2 Z M784.5 574.4 L789.3 572.2 L795.7 572.2 L800.5 574.4 L795.7 576.6 L789.3 576.6 Z M866.0 526.5 L870.8 524.3 L877.2 524.3 L882.0 526.5 L877.2 528.7 L870.8 528.7 Z M869.0 545.0 L873.8 542.8 L880.2 542.8 L885.0 545.0 L880.2 547.2 L873.8 547.2 Z M963.7 495.0 L968.5 492.8 L974.9 492.8 L979.7 495.0 L974.9 497.2 L968.5 497.2 Z M966.0 512.6 L970.8 510.4 L977.2 510.4 L982.0 512.6 L977.2 514.8 L970.8 514.8 Z M1281.0 481.0 L1309.0 493.5 L1281.0 494.0 Z M1339.7 502.3 L1365.9 502.3 L1392.0 524.0 L1363.4 524.0 Z M1434.4 529.7 L1458.0 529.7 L1484.0 553.0 L1459.0 553.0 Z M1522.3 559.3 L1555.8 559.3 L1575.0 574.5 L1536.6 574.5 Z M1311.0 488.7 L1316.1 486.5 L1322.9 486.5 L1328.0 488.7 L1322.9 490.9 L1316.1 490.9 Z M1307.5 508.8 L1312.6 506.6 L1319.4 506.6 L1324.5 508.8 L1319.4 511.0 L1312.6 511.0 Z M1403.2 516.3 L1408.3 514.1 L1415.1 514.1 L1420.2 516.3 L1415.1 518.5 L1408.3 518.5 Z M1401.0 537.2 L1406.1 535.0 L1412.9 535.0 L1418.0 537.2 L1412.9 539.4 L1406.1 539.4 Z M1497.5 545.0 L1502.6 542.8 L1509.4 542.8 L1514.5 545.0 L1509.4 547.2 L1502.6 547.2 Z M1592.2 573.5 L1597.3 571.3 L1604.1 571.3 L1609.2 573.5 L1604.1 575.7 L1597.3 575.7 Z" clip-rule="evenodd"/></clipPath>
<linearGradient id="tg" x1="1031" x2="1264" y1="0" y2="0" gradientUnits="userSpaceOnUse">
<stop offset="0" stop-color="#18aca0"/><stop offset="0.15" stop-color="#10b030"/><stop offset="0.35" stop-color="#90c400"/><stop offset="0.55" stop-color="#e0a800"/><stop offset="0.7" stop-color="#a8c000"/><stop offset="0.82" stop-color="#10b030"/><stop offset="1" stop-color="#18aca0"/></linearGradient>
<linearGradient id="tg2" x1="1031" x2="1264" y1="0" y2="0" gradientUnits="userSpaceOnUse">
<stop offset="0" stop-color="#18a0a0"/><stop offset="0.15" stop-color="#10b030"/><stop offset="0.35" stop-color="#a8b800"/><stop offset="0.65" stop-color="#c8c000"/><stop offset="0.8" stop-color="#18b030"/><stop offset="1" stop-color="#18a0a0"/></linearGradient>
</defs>
<g transform="translate(-600,-440)">
<g clip-path="url(#bc)"><path d="M600.0 440.0 L1700.0 440.0 L1700.0 660.0 L600.0 660.0 Z" fill="#1b8ac6"/><path d="M600.0 660.0 L600.0 440.0 L845.0 440.0 L845.0 520.0 L840.0 660.0 Z" fill="#0a0ad2"/><path d="M840.0 600.0 L975.0 600.0 L975.0 660.0 L840.0 660.0 Z" fill="#1670a8"/><path d="M845.0 440.0 L905.0 440.0 L905.0 535.0 L845.0 560.0 Z" fill="#1b8ac6"/><path d="M870.0 470.0 L930.0 470.0 L960.0 515.0 L900.0 545.0 L880.0 540.0 Z" fill="#0a0ad2"/><path d="M930.0 490.0 L1010.0 470.0 L1012.0 530.0 L960.0 545.0 Z" fill="#1b8ac6"/><path d="M940.0 505.0 L1012.0 480.0 L1012.0 520.0 L955.0 535.0 Z" fill="#0808b0"/><path d="M1012.0 455.0 L1031.0 455.0 L1031.0 640.0 L1012.0 640.0 Z" fill="#19a6a8"/><path d="M1264.0 450.0 L1282.0 450.0 L1282.0 640.0 L1264.0 640.0 Z" fill="#19a6a8"/><path d="M1031.0 612.0 L1264.0 612.0 L1264.0 640.0 L1031.0 640.0 Z" fill="#1aa0b0"/><path d="M1110.0 615.0 L1264.0 615.0 L1264.0 640.0 L1110.0 640.0 Z" fill="#19a6a8"/><path d="M1031.0 450.0 L1264.0 450.0 L1264.0 513.0 L1031.0 513.0 Z" fill="url(#tg)"/><path d="M1082.0 484.0 L1128.0 472.0 L1136.0 486.0 L1128.0 501.0 L1082.0 490.0 Z" fill="#d81010"/><path d="M1160.0 486.0 L1168.0 471.0 L1214.0 482.0 L1214.0 489.0 L1168.0 501.0 Z" fill="#d01010"/><path d="M1030.0 500.0 L1264.0 500.0 L1264.0 513.0 L1030.0 513.0 Z" fill="url(#tg2)"/><path d="M1282.0 440.0 L1380.0 440.0 L1380.0 540.0 L1282.0 500.0 Z" fill="#0a0ad2"/><path d="M1282.0 470.0 L1310.0 470.0 L1320.0 520.0 L1282.0 510.0 Z" fill="#1b8ac6"/><path d="M1335.0 500.0 L1380.0 500.0 L1390.0 540.0 L1350.0 540.0 Z" fill="#0808b0"/><path d="M1380.0 440.0 L1470.0 440.0 L1470.0 570.0 L1380.0 540.0 Z" fill="#1b8ac6"/><path d="M1470.0 440.0 L1700.0 440.0 L1700.0 660.0 L1445.0 660.0 L1430.0 578.0 L1502.0 578.0 L1474.0 505.0 Z" fill="#0a0ad2"/><path d="M1430.0 575.0 L1700.0 575.0 L1700.0 660.0 L1445.0 660.0 Z" fill="#0a0ad2"/>
<rect x="600" y="440" width="1080" height="220" fill="url(#m1)"/><rect x="600" y="440" width="1080" height="220" fill="url(#m2)"/>
<path d="M657.4 599.4L567.0 625.9M638.2 599.4L728.6 625.9M730.4 599.4L640.0 625.9M565.2 599.4L655.6 625.9M782.6 598.0L692.2 624.5M763.4 598.0L853.8 624.5M855.6 598.0L765.2 624.5M690.4 598.0L780.8 624.5M907.8 596.5L817.4 623.0M888.6 596.5L979.0 623.0M980.8 596.5L890.4 623.0M815.6 596.5L906.0 623.0M1033.0 595.1L942.6 621.6M1013.8 595.1L1104.2 621.6M1106.0 595.1L1015.6 621.6M940.8 595.1L1031.2 621.6M1158.2 593.7L1067.8 620.2M1139.0 593.7L1229.4 620.2M1231.2 593.7L1140.8 620.2M1066.0 593.7L1156.4 620.2M1283.4 592.3L1193.0 618.8M1264.2 592.3L1354.6 618.8M1356.4 592.3L1266.0 618.8M1191.2 592.3L1281.6 618.8M1408.6 590.8L1318.2 617.3M1389.4 590.8L1479.8 617.3M1481.6 590.8L1391.2 617.3M1316.4 590.8L1406.8 617.3M1533.8 589.4L1443.4 615.9M1514.6 589.4L1605.0 615.9M1606.8 589.4L1516.4 615.9M1441.6 589.4L1532.0 615.9M1659.0 588.0L1568.6 614.5M1639.8 588.0L1730.2 614.5M1732.0 588.0L1641.6 614.5M1566.8 588.0L1657.2 614.5M638 600.0L1659 588.4M638 625.5L1659 613.9M1166.0 472.0L1054.0 500.0M1133.9 472.0L1278.8 500.0M1251.6 472.0L1121.9 500.0M1016.9 472.0L1192.9 500.0M1007.8 472.0L1098.6 500.0M1111.6 472.0L1020.8 500.0M1272.0 472.0L1194.1 500.0M1185.7 472.0L1296.6 500.0M1030 474L1264 472.5M1030 500L1264 498.5M765.4 556.8L708.1 598.0M784.1 556.8L737.1 598.0M851.1 527.0L795.9 574.0M875.7 527.0L816.2 574.0M939.0 498.0L885.4 542.0M967.4 498.0L909.1 542.0M1024.3 467.0L970.7 512.0M1047.1 467.0L982.9 512.0M1326.6 490.3L1376.5 536.0M1351.5 490.3L1406.4 536.0M1421.7 517.7L1471.7 565.0M1444.6 517.7L1497.4 565.0M1511.0 547.3L1547.9 586.5M1540.6 547.3L1590.2 586.5M1235.0 463.0L1290.0 507.0M1260.0 463.0L1315.0 507.0M641 599L1013 475M700 593L1013 489M807 572L1013 503M760 600L1013 516M1281 472L1657 586M1281 487L1640 590M1281 500L1495 563M1281 513.5L1495 575" stroke="#000" stroke-width="2" fill="none"/>
</g>
<path d="M638.0 640.0 L641.0 587.5 L1013.0 463.5 L1013.0 462.0 L1030.0 461.5 L1264.0 459.5 L1281.0 457.5 L1657.5 575.0 L1659.5 580.0 L1659.0 622.0 L1650.0 626.0 L1400.0 629.5 L638.0 640.0 Z M807.0 584.8 L1013.0 516.0 L1013.0 582.8 Z M1030.0 512.5 L1264.5 510.5 L1264.5 580.4 L1030.0 582.7 Z M1281.0 513.5 L1495.0 578.1 L1281.0 580.2 Z M736.5 611.5 L773.0 600.8 L809.5 611.5 L773.0 622.2 Z M861.7 610.0 L898.2 599.3 L934.7 610.0 L898.2 620.7 Z M986.9 608.6 L1013.0 601.0 L1013.0 616.3 Z M1030.5 600.0 L1059.9 608.6 L1030.5 617.2 Z M1112.1 607.2 L1148.6 596.5 L1185.1 607.2 L1148.6 617.9 Z M1237.3 605.8 L1264.5 597.8 L1264.5 613.7 Z M1281.0 597.2 L1310.3 605.8 L1281.0 614.3 Z M1362.5 604.3 L1399.0 593.6 L1435.5 604.3 L1399.0 615.0 Z M1487.7 602.9 L1524.2 592.2 L1560.7 602.9 L1524.2 613.6 Z M697.5 622.6 L705.0 620.3 L715.0 620.3 L722.5 622.6 L715.0 624.9 L705.0 624.9 Z M822.7 600.0 L830.2 597.7 L840.2 597.7 L847.7 600.0 L840.2 602.3 L830.2 602.3 Z M822.7 621.2 L830.2 618.9 L840.2 618.9 L847.7 621.2 L840.2 623.5 L830.2 623.5 Z M947.9 598.5 L955.4 596.2 L965.4 596.2 L972.9 598.5 L965.4 600.8 L955.4 600.8 Z M947.9 619.7 L955.4 617.4 L965.4 617.4 L972.9 619.7 L965.4 622.0 L955.4 622.0 Z M1073.1 597.1 L1080.6 594.8 L1090.6 594.8 L1098.1 597.1 L1090.6 599.4 L1080.6 599.4 Z M1073.1 618.3 L1080.6 616.0 L1090.6 616.0 L1098.1 618.3 L1090.6 620.6 L1080.6 620.6 Z M1198.3 595.7 L1205.8 593.4 L1215.8 593.4 L1223.3 595.7 L1215.8 598.0 L1205.8 598.0 Z M1198.3 616.9 L1205.8 614.6 L1215.8 614.6 L1223.3 616.9 L1215.8 619.2 L1205.8 619.2 Z M1323.5 594.2 L1331.0 591.9 L1341.0 591.9 L1348.5 594.2 L1341.0 596.5 L1331.0 596.5 Z M1323.5 615.4 L1331.0 613.1 L1341.0 613.1 L1348.5 615.4 L1341.0 617.7 L1331.0 617.7 Z M1448.7 592.8 L1456.2 590.5 L1466.2 590.5 L1473.7 592.8 L1466.2 595.1 L1456.2 595.1 Z M1448.7 614.0 L1456.2 611.7 L1466.2 611.7 L1473.7 614.0 L1466.2 616.3 L1456.2 616.3 Z M1573.9 591.4 L1581.4 589.1 L1591.4 589.1 L1598.9 591.4 L1591.4 593.7 L1581.4 593.7 Z M1573.9 612.6 L1581.4 610.3 L1591.4 610.3 L1598.9 612.6 L1591.4 614.9 L1581.4 614.9 Z M654.0 603.4 L666.0 611.0 L654.0 618.4 Z M1631.0 596.4 L1643.8 591.6 L1643.8 603.6 Z M1030.5 479.0 L1059.7 488.0 L1030.5 497.0 Z M1264.5 474.7 L1236.4 484.8 L1264.5 491.9 Z M1108.0 486.5 L1152.0 475.5 L1196.0 484.0 L1152.0 493.5 Z M1073.5 476.8 L1080.7 474.6 L1090.3 474.6 L1097.5 476.8 L1090.3 479.0 L1080.7 479.0 Z M1071.0 497.5 L1078.2 495.3 L1087.8 495.3 L1095.0 497.5 L1087.8 499.7 L1078.2 499.7 Z M1196.5 475.5 L1203.7 473.3 L1213.3 473.3 L1220.5 475.5 L1213.3 477.7 L1203.7 477.7 Z M1196.7 495.3 L1203.9 493.1 L1213.5 493.1 L1220.7 495.3 L1213.5 497.5 L1203.9 497.5 Z M748.7 568.8 L768.5 570.5 L750.8 586.0 L724.8 586.0 Z M837.0 539.0 L860.5 539.0 L831.4 562.0 L810.0 562.0 Z M924.4 510.0 L951.5 510.0 L925.0 530.0 L900.0 530.0 Z M1013.0 485.0 L1013.0 499.4 L996.7 497.0 Z M777.5 556.0 L782.3 553.8 L788.7 553.8 L793.5 556.0 L788.7 558.2 L782.3 558.2 Z M784.5 574.4 L789.3 572.2 L795.7 572.2 L800.5 574.4 L795.7 576.6 L789.3 576.6 Z M866.0 526.5 L870.8 524.3 L877.2 524.3 L882.0 526.5 L877.2 528.7 L870.8 528.7 Z M869.0 545.0 L873.8 542.8 L880.2 542.8 L885.0 545.0 L880.2 547.2 L873.8 547.2 Z M963.7 495.0 L968.5 492.8 L974.9 492.8 L979.7 495.0 L974.9 497.2 L968.5 497.2 Z M966.0 512.6 L970.8 510.4 L977.2 510.4 L982.0 512.6 L977.2 514.8 L970.8 514.8 Z M1281.0 481.0 L1309.0 493.5 L1281.0 494.0 Z M1339.7 502.3 L1365.9 502.3 L1392.0 524.0 L1363.4 524.0 Z M1434.4 529.7 L1458.0 529.7 L1484.0 553.0 L1459.0 553.0 Z M1522.3 559.3 L1555.8 559.3 L1575.0 574.5 L1536.6 574.5 Z M1311.0 488.7 L1316.1 486.5 L1322.9 486.5 L1328.0 488.7 L1322.9 490.9 L1316.1 490.9 Z M1307.5 508.8 L1312.6 506.6 L1319.4 506.6 L1324.5 508.8 L1319.4 511.0 L1312.6 511.0 Z M1403.2 516.3 L1408.3 514.1 L1415.1 514.1 L1420.2 516.3 L1415.1 518.5 L1408.3 518.5 Z M1401.0 537.2 L1406.1 535.0 L1412.9 535.0 L1418.0 537.2 L1412.9 539.4 L1406.1 539.4 Z M1497.5 545.0 L1502.6 542.8 L1509.4 542.8 L1514.5 545.0 L1509.4 547.2 L1502.6 547.2 Z M1592.2 573.5 L1597.3 571.3 L1604.1 571.3 L1609.2 573.5 L1604.1 575.7 L1597.3 575.7 Z" fill="none" stroke="#000" stroke-width="2"/>
<path d="M1013 463v168M1030.5 462v168M1264.5 459v168M1281 458v168" stroke="#000" stroke-width="1.4"/>
</g></svg>
<div class="a" style="left:375px;top:890px;width:1545px;height:30px;background:#eeeef2;border-top:1px solid #d4d4e2;box-sizing:border-box"></div>
<div class="a" style="left:376px;top:890px;width:79px;height:24px;background:#f5f5f7;border:1px solid #c9cbe0;border-top:none;box-sizing:border-box"></div>
<div class="t" style="left:383px;top:894.35px;font-size:14px;line-height:14px;color:#3a8ee6;font-weight:normal;transform:scaleX(1.0495);transform-origin:0 0;">Geometry</div>
<div class="t" style="left:462px;top:894.35px;font-size:14px;line-height:14px;color:#444;font-weight:normal;transform:scaleX(1.0109);transform-origin:0 0;">Messages</div>
<div class="t" style="left:541.5px;top:894.35px;font-size:14px;line-height:14px;color:#444;font-weight:normal;transform:scaleX(1.0152);transform-origin:0 0;">Graph</div>
<div class="a" style="left:375px;top:920px;width:1545px;height:24px;background:#eeeef2;border-top:1px solid #d4d4e2;border-left:1px solid #d4d4e2;box-sizing:border-box"></div>
<div class="t" style="left:382px;top:923.95px;font-size:14px;line-height:14px;color:#3c3c3c;font-weight:normal;transform:scaleX(1.0079);transform-origin:0 0;">Tabular Data</div>
<div class="a" style="left:470px;top:928px;width:1383px;height:8px;background-image:radial-gradient(circle at 1px 1px,#a8a8b2 0.55px,transparent 0.9px),radial-gradient(circle at 3.5px 3.5px,#a8a8b2 0.55px,transparent 0.9px);background-size:5px 5px"></div>
<svg class="a" style="left:1857px;top:929px;" width="11" height="6" viewBox="0 0 11 6"><path d="M0 0h11L5.5 6z" fill="#1e1e1e"/></svg>
<svg class="a" style="left:1877px;top:924px;" width="12" height="16" viewBox="0 0 12 16"><path d="M3 1h6M4 1v8h4V1M1 9.5h10M6 10v6" fill="none" stroke="#1e1e1e" stroke-width="1.6"/></svg>
<svg class="a" style="left:1897px;top:925px;" width="13" height="13" viewBox="0 0 13 13"><path d="M1.5 1.5l10 10M11.5 1.5l-10 10" stroke="#1e1e1e" stroke-width="1.8"/></svg>
<div class="a" style="left:375px;top:944px;width:1545px;height:74px;background:#a0a0a0"></div>
<div class="a" style="left:376px;top:944px;width:17px;height:22px;background:#f0f0f0;border-right:1px solid #a0a0a0;border-bottom:1px solid #a0a0a0;box-sizing:border-box"></div>
<div class="a" style="left:393px;top:944px;width:59px;height:22px;background:#f0f0f0;border-right:1px solid #a0a0a0;border-bottom:1px solid #a0a0a0;box-sizing:border-box"></div>
<div class="a" style="left:452px;top:944px;width:129px;height:22px;background:#f0f0f0;border-right:1px solid #a0a0a0;border-bottom:1px solid #a0a0a0;box-sizing:border-box"></div>
<div class="a" style="left:581px;top:944px;width:130px;height:22px;background:#f0f0f0;border-right:1px solid #a0a0a0;border-bottom:1px solid #a0a0a0;box-sizing:border-box"></div>
<div class="a" style="left:711px;top:944px;width:119px;height:22px;background:#f0f0f0;border-right:1px solid #a0a0a0;border-bottom:1px solid #a0a0a0;box-sizing:border-box"></div>
<div class="a" style="left:376px;top:966px;width:17px;height:19px;background:#f0f0f0;border-right:1px solid #a0a0a0;border-bottom:1px solid #a0a0a0;box-sizing:border-box"></div>
<div class="a" style="left:393px;top:966px;width:59px;height:19px;background:#e7e6e2;border-right:1px solid #a0a0a0;border-bottom:1px solid #a0a0a0;box-sizing:border-box"></div>
<div class="a" style="left:452px;top:966px;width:129px;height:19px;background:#e7e6e2;border-right:1px solid #a0a0a0;border-bottom:1px solid #a0a0a0;box-sizing:border-box"></div>
<div class="a" style="left:581px;top:966px;width:130px;height:19px;background:#e7e6e2;border-right:1px solid #a0a0a0;border-bottom:1px solid #a0a0a0;box-sizing:border-box"></div>
<div class="a" style="left:711px;top:966px;width:119px;height:19px;background:#e7e6e2;border-right:1px solid #a0a0a0;border-bottom:1px solid #a0a0a0;box-sizing:border-box"></div>
<div class="a" style="left:392px;top:944px;width:2px;height:41px;background:#a8a8a8"></div>
<div class="t" style="left:397.5px;top:948.15px;font-size:14px;line-height:14px;color:#111;font-weight:bold;transform:scaleX(0.8798);transform-origin:0 0;">Time [s]</div>
<div class="a" style="left:457px;top:947px;width:14px;height:16px;background:#fff;border:1px solid #999;border-right-color:#ddd;border-bottom-color:#ddd;box-sizing:border-box"></div>
<svg class="a" style="left:459px;top:951px;" width="10" height="9" viewBox="0 0 10 9"><path d="M1 4.5l2.5 3L9 1" fill="none" stroke="#000" stroke-width="2"/></svg>
<div class="t" style="left:480.5px;top:948.15px;font-size:14px;line-height:14px;color:#e0202a;font-weight:normal;transform:scaleX(1.0025);transform-origin:0 0;">Minimum [mm]</div>
<div class="a" style="left:586px;top:947px;width:14px;height:16px;background:#fff;border:1px solid #999;border-right-color:#ddd;border-bottom-color:#ddd;box-sizing:border-box"></div>
<svg class="a" style="left:588px;top:951px;" width="10" height="9" viewBox="0 0 10 9"><path d="M1 4.5l2.5 3L9 1" fill="none" stroke="#000" stroke-width="2"/></svg>
<div class="t" style="left:609.5px;top:948.15px;font-size:14px;line-height:14px;color:#30a030;font-weight:normal;transform:scaleX(0.9931);transform-origin:0 0;">Maximum [mm]</div>
<div class="a" style="left:716px;top:947px;width:14px;height:16px;background:#fff;border:1px solid #999;border-right-color:#ddd;border-bottom-color:#ddd;box-sizing:border-box"></div>
<svg class="a" style="left:718px;top:951px;" width="10" height="9" viewBox="0 0 10 9"><path d="M1 4.5l2.5 3L9 1" fill="none" stroke="#000" stroke-width="2"/></svg>
<div class="t" style="left:739.5px;top:948.15px;font-size:14px;line-height:14px;color:#3a3ad0;font-weight:normal;transform:scaleX(0.9669);transform-origin:0 0;">Average [mm]</div>
<div class="t" style="left:378px;top:968.15px;font-size:14px;line-height:14px;color:#111;font-weight:normal;">1</div>
<div class="t" style="left:397.5px;top:968.15px;font-size:14px;line-height:14px;color:#111;font-weight:normal;">1.</div>
<div class="t" style="left:456px;top:968.15px;font-size:14px;line-height:14px;color:#111;font-weight:normal;">0.</div>
<div class="t" style="left:584.5px;top:968.15px;font-size:14px;line-height:14px;color:#111;font-weight:normal;transform:scaleX(0.9809);transform-origin:0 0;">22.701</div>
<div class="t" style="left:715px;top:968.15px;font-size:14px;line-height:14px;color:#111;font-weight:normal;transform:scaleX(0.9926);transform-origin:0 0;">3.8214</div>
<div class="a" style="left:0px;top:1018px;width:1920px;height:24px;background:#007acc"></div>
<div class="a" style="left:0px;top:1041px;width:1920px;height:3px;background:#2b2622"></div>
<div class="a" style="left:416px;top:1041px;width:45px;height:3px;background:#c8783a"></div>
<div class="t" style="left:8px;top:1024.15px;font-size:14px;line-height:14px;color:#fff;font-weight:normal;transform:scaleX(1.0502);transform-origin:0 0;">Ready</div>
<svg class="a" style="left:1287px;top:1021px;" width="24" height="20" viewBox="0 0 24 20"><path d="M1 6h13v9H7l-4 4v-4H1z" fill="#f2c200" stroke="#b08800" stroke-width="1"/><circle cx="16" cy="7" r="6.3" fill="#2040d0" stroke="#fff" stroke-width="1"/><text x="16" y="11" font-family="Liberation Serif" font-weight="bold" font-size="10" fill="#fff" text-anchor="middle">i</text></svg>
<div class="t" style="left:1311.5px;top:1024.15px;font-size:14px;line-height:14px;color:#fff;font-weight:normal;transform:scaleX(1.0076);transform-origin:0 0;">1 Message</div>
<div class="t" style="left:1402.5px;top:1024.15px;font-size:14px;line-height:14px;color:#fff;font-weight:normal;transform:scaleX(1.0583);transform-origin:0 0;">No Selection</div>
<svg class="a" style="left:1512px;top:1026px;" width="12" height="8" viewBox="0 0 12 8"><path d="M0 7h12L6 0z" fill="#fff"/></svg>
<div class="t" style="left:1530.5px;top:1024.15px;font-size:14px;line-height:14px;color:#fff;font-weight:normal;transform:scaleX(1.0825);transform-origin:0 0;">Metric (mm, kg, N, s, mV, mA)</div>
<div class="t" style="left:1746.5px;top:1024.15px;font-size:14px;line-height:14px;color:#fff;font-weight:normal;transform:scaleX(1.0111);transform-origin:0 0;">Degrees</div>
<div class="t" style="left:1816px;top:1024.15px;font-size:14px;line-height:14px;color:#fff;font-weight:normal;transform:scaleX(1.0604);transform-origin:0 0;">rad/s</div>
<div class="t" style="left:1862.5px;top:1024.15px;font-size:14px;line-height:14px;color:#fff;font-weight:normal;transform:scaleX(1.0021);transform-origin:0 0;">Celsius</div>
<div class="a" style="left:372px;top:1017px;width:133px;height:25px;background:#fff;border:1px solid #767676;box-sizing:border-box"></div>
<div class="t" style="left:378.5px;top:1023.15px;font-size:14px;line-height:14px;color:#444;font-weight:normal;transform:scaleX(1.0422);transform-origin:0 0;">Registry Mechanic</div>
</body></html>
